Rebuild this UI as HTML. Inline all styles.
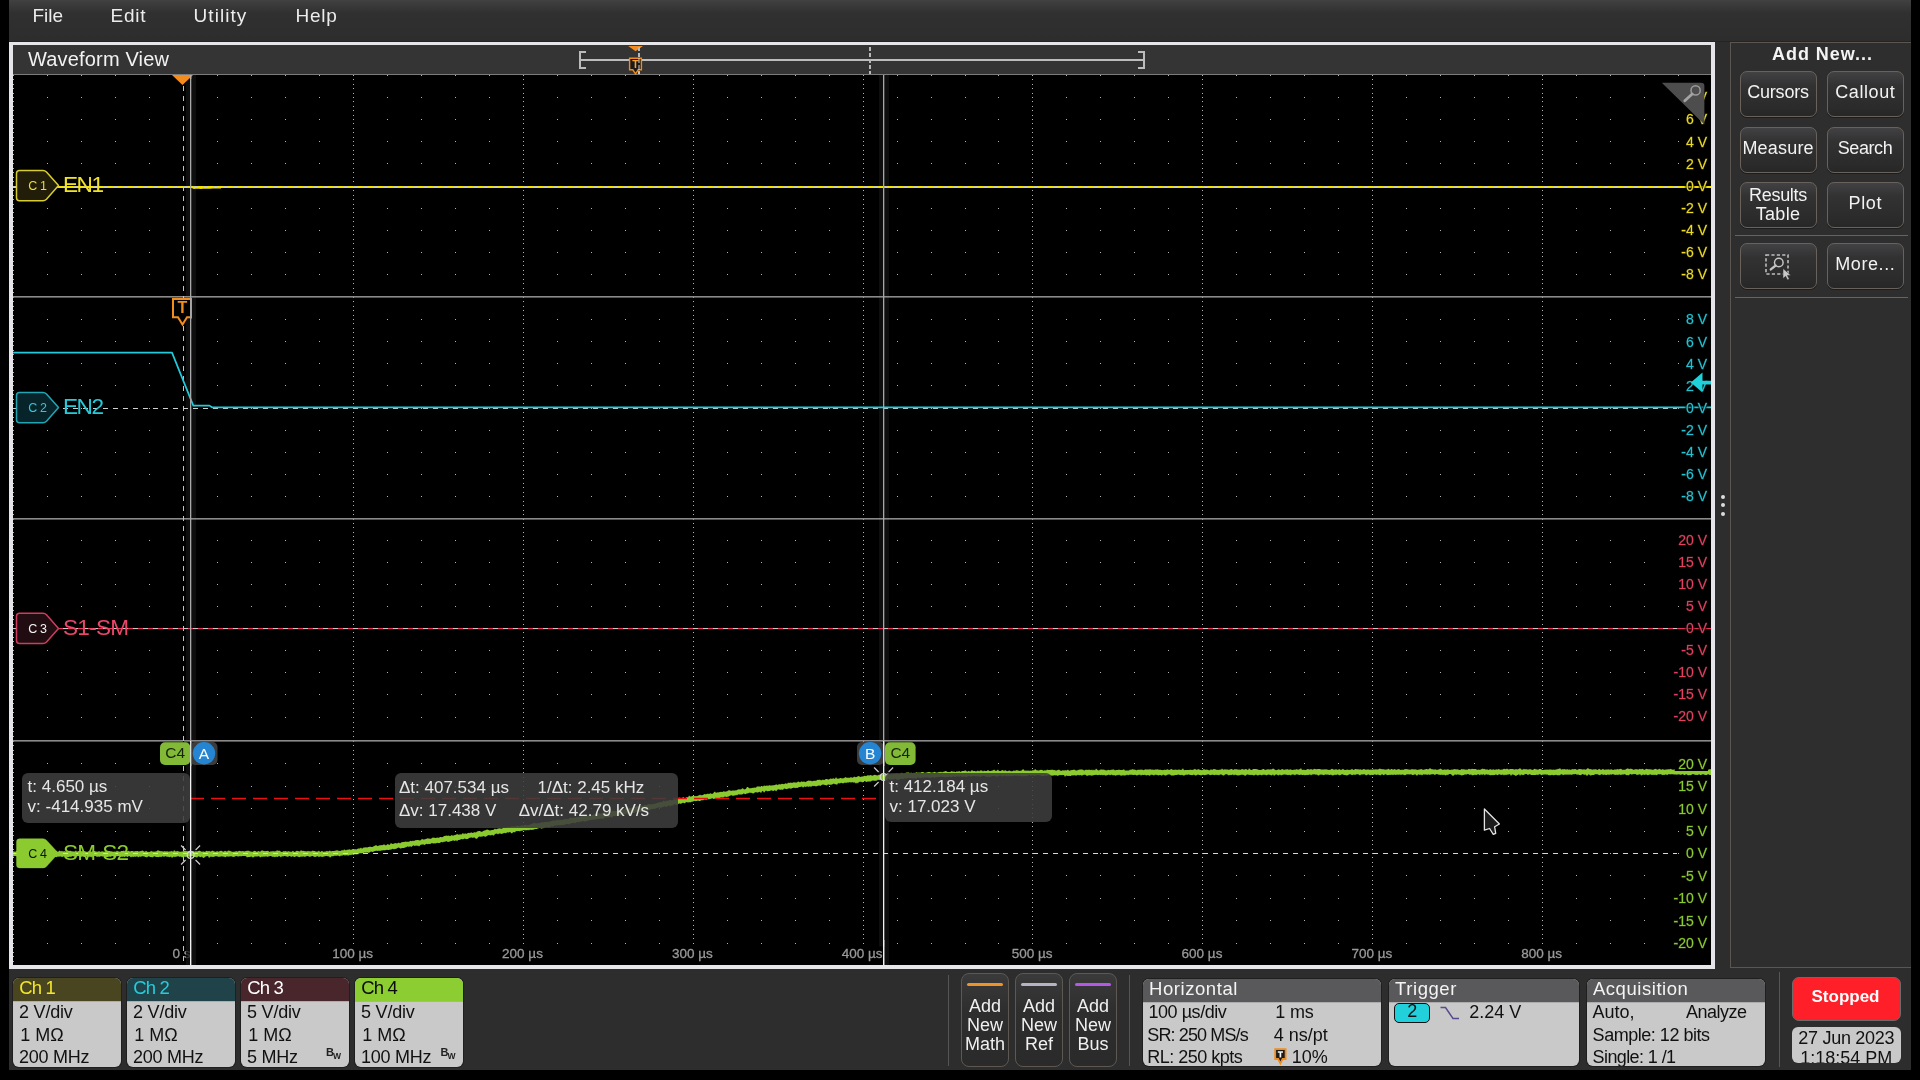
<!DOCTYPE html>
<html lang="en"><head><meta charset="utf-8"><title>Waveform View</title>
<style>
*{box-sizing:border-box;margin:0;padding:0}
html,body{width:1920px;height:1080px;background:#000;overflow:hidden}
body{position:relative;-webkit-font-smoothing:antialiased;font-family:"Liberation Sans",sans-serif;color:#eee}
.abs{position:absolute}
.t{position:absolute;white-space:nowrap;line-height:1}
#root{position:absolute;left:0;top:0;width:1920px;height:1080px;will-change:transform}
#menubar{left:9px;top:0;width:1902px;height:42px;background:linear-gradient(#414141 0,#303030 13px,#2d2d2d 100%);border-bottom:1px solid #242424}
#menubar .t{font-size:19px;color:#ececec;top:6px}
#wvframe{left:9px;top:42px;width:1706px;height:927px;background:#e6e6ea}
#wvtitle{left:13px;top:45px;width:1698px;height:30px;background:#343434;border-bottom:1px solid #7c7c7c}
#grat{left:13px;top:75px;width:1698px;height:890px;background:#000}
#gap{left:1715px;top:42px;width:196px;height:1028px;background:#2d2d2d}
#side{left:1730px;top:42px;width:181px;height:926px;border:1px solid #5c5652;border-right:none;background:#2e2e2e}
#bottom{left:9px;top:969px;width:1902px;height:101px;background:#2d2d2d}
.sbtn{position:absolute;width:77px;height:46px;border:1px solid #69625c;border-radius:7px;background:linear-gradient(#424244 0,#323233 30%,#2b2b2b 80%,#272727 100%);color:#f2f2f2;font-size:18px;text-align:center;line-height:41px;box-shadow:0 1px 0 #1c1c1c}
.sep{position:absolute;height:1px;background:#6a625c}
.badge{position:absolute;border-radius:6px;background:#c9c9c9;overflow:hidden;color:#111;font-size:18px;box-shadow:0 0 0 1px #1f1f1f}
.badge .hd{position:absolute;left:0;top:0;right:0;border-bottom:1.4px solid #adadad}
.badge .t{left:6px}
.abtn{position:absolute;top:973px;width:48px;height:94px;border:1px solid #5e5853;border-radius:8px;background:linear-gradient(#3a3a3b 0,#2e2e2e 40%,#2a2a2a 100%);color:#f0f0f0;font-size:18px;text-align:center;line-height:19.2px}
.abtn i{position:absolute;left:5px;right:5px;top:9px;height:3px;border-radius:2px}
.abtn span{position:absolute;left:-10px;right:-10px;top:22.6px}
.ro{position:absolute;border-radius:6px;background:rgba(62,62,62,.88);color:#e4e4e4;font-size:17px}
</style></head>
<body>
<div id="root">
<div id="menubar" class="abs">
</div>
<div class="t" style="left:32.5px;top:6.02px;font-size:19px;color:#ececec;letter-spacing:0px;">File</div>
<div class="t" style="left:110.5px;top:6.02px;font-size:19px;color:#ececec;letter-spacing:0.75px;">Edit</div>
<div class="t" style="left:193.5px;top:6.02px;font-size:19px;color:#ececec;letter-spacing:1.07px;">Utility</div>
<div class="t" style="left:295.5px;top:6.02px;font-size:19px;color:#ececec;letter-spacing:0.75px;">Help</div>
<div id="wvframe" class="abs"></div>
<div id="wvtitle" class="abs"></div>
<div id="grat" class="abs"></div>
<div class="t" style="left:28px;top:49.07px;font-size:20px;color:#f2f2f2;letter-spacing:0.17px;">Waveform View</div>
<div id="gap" class="abs"></div>
<div id="side" class="abs"></div>
<div id="bottom" class="abs"></div>
<div class="t" style="left:1772px;top:44.76px;font-size:18px;color:#f4f4f4;font-weight:bold;letter-spacing:0.95px;">Add New...</div>
<div class="sbtn" style="left:1739.5px;top:71px;letter-spacing:-0.2px;padding-left:-0.2px">Cursors</div>
<div class="sbtn" style="left:1826.5px;top:71px;letter-spacing:0.6px;padding-left:0.6px">Callout</div>
<div class="sbtn" style="left:1739.5px;top:127px;letter-spacing:0.2px;padding-left:0.2px">Measure</div>
<div class="sbtn" style="left:1826.5px;top:127px;letter-spacing:-0.4px;padding-left:-0.4px">Search</div>
<div class="sbtn" style="left:1739.5px;top:182px;line-height:19px;padding-top:2.6px"><span style="letter-spacing:-.3px">Results</span><br><span style="letter-spacing:.3px">Table</span></div>
<div class="sbtn" style="left:1826.5px;top:182px;letter-spacing:0.6px;padding-left:0.6px">Plot</div>
<div class="sep" style="left:1735px;top:235px;width:173px"></div>
<div class="sbtn" style="left:1739.5px;top:243px;letter-spacing:0px;padding-left:0px"></div>
<div class="sbtn" style="left:1826.5px;top:243px;letter-spacing:0.6px;padding-left:0.6px">More...</div>
<div class="sep" style="left:1735px;top:297px;width:173px"></div>
<svg class="abs" style="left:1760px;top:250px" width="36" height="32" viewBox="1760 250 36 32">
<rect x="1766" y="255" width="22" height="19" fill="none" stroke="#bdbdbd" stroke-width="1.6" stroke-dasharray="3.2 2.2"/>
<circle cx="1778.8" cy="262.5" r="4.3" fill="#2e2e2e" stroke="#c4c4c4" stroke-width="1.5"/>
<line x1="1775.6" y1="265.6" x2="1770.8" y2="269.4" stroke="#c4c4c4" stroke-width="2.4" stroke-linecap="round"/>
<path d="M1783 268.5 L1783 278.5 L1785.6 276.3 L1787.6 280 L1789.3 279.1 L1787.4 275.5 L1790.8 275.2 Z" fill="#c8c8c8" stroke="#2a2a2a" stroke-width=".5"/>
</svg>
<div class="abs" style="left:1720.5px;top:494.5px;width:4px;height:4px;border-radius:2px;background:#dcdcdc"></div>
<div class="abs" style="left:1720.5px;top:503px;width:4px;height:4px;border-radius:2px;background:#dcdcdc"></div>
<div class="abs" style="left:1720.5px;top:511.5px;width:4px;height:4px;border-radius:2px;background:#dcdcdc"></div>
<div class="badge" style="left:13px;top:978px;width:108px;height:89px"><div class="hd" style="background:#4a4521;height:23.9px"></div><div class="t" style="left:6.3px;top:1.04px;font-size:18.5px;color:#f4e62a;letter-spacing:-0.9px;">Ch 1</div><div class="t" style="left:6px;top:24.56px;font-size:18px;color:#111;letter-spacing:-0.2px;">2 V/div</div><div class="t" style="left:7.2px;top:47.76px;font-size:18px;color:#111;letter-spacing:0px;">1 MΩ</div><div class="t" style="left:6px;top:69.76px;font-size:18px;color:#111;letter-spacing:-0.25px;">200 MHz</div></div>
<div class="badge" style="left:127px;top:978px;width:108px;height:89px"><div class="hd" style="background:#1f4349;height:23.9px"></div><div class="t" style="left:6.3px;top:1.04px;font-size:18.5px;color:#27cbdc;letter-spacing:-0.9px;">Ch 2</div><div class="t" style="left:6px;top:24.56px;font-size:18px;color:#111;letter-spacing:-0.2px;">2 V/div</div><div class="t" style="left:7.2px;top:47.76px;font-size:18px;color:#111;letter-spacing:0px;">1 MΩ</div><div class="t" style="left:6px;top:69.76px;font-size:18px;color:#111;letter-spacing:-0.25px;">200 MHz</div></div>
<div class="badge" style="left:241px;top:978px;width:108px;height:89px"><div class="hd" style="background:#48262c;height:23.9px"></div><div class="t" style="left:6.3px;top:1.04px;font-size:18.5px;color:#ffffff;letter-spacing:-0.9px;">Ch 3</div><div class="t" style="left:6px;top:24.56px;font-size:18px;color:#111;letter-spacing:-0.2px;">5 V/div</div><div class="t" style="left:7.2px;top:47.76px;font-size:18px;color:#111;letter-spacing:0px;">1 MΩ</div><div class="t" style="left:6px;top:69.76px;font-size:18px;color:#111;letter-spacing:-0.25px;">5 MHz</div><div class="t" style="left:85px;top:69px;font-size:11px;font-weight:bold;color:#222">B<span style="font-size:8.5px;position:relative;top:3.4px;left:-1px">W</span></div></div>
<div class="badge" style="left:355px;top:978px;width:108px;height:89px"><div class="hd" style="background:#8ccd32;height:23.9px"></div><div class="t" style="left:6.3px;top:1.04px;font-size:18.5px;color:#0a0a0a;letter-spacing:-0.9px;">Ch 4</div><div class="t" style="left:6px;top:24.56px;font-size:18px;color:#111;letter-spacing:-0.2px;">5 V/div</div><div class="t" style="left:7.2px;top:47.76px;font-size:18px;color:#111;letter-spacing:0px;">1 MΩ</div><div class="t" style="left:6px;top:69.76px;font-size:18px;color:#111;letter-spacing:-0.25px;">100 MHz</div><div class="t" style="left:85.5px;top:69px;font-size:11px;font-weight:bold;color:#222">B<span style="font-size:8.5px;position:relative;top:3.4px;left:-1px">W</span></div></div>
<div class="abs" style="left:948px;top:975px;width:1px;height:91px;background:#555"></div>
<div class="abs" style="left:1129px;top:975px;width:1px;height:91px;background:#555"></div>
<div class="abs" style="left:1779px;top:972px;width:1px;height:95px;background:#5c5450"></div>
<div class="abtn" style="left:961px"><i style="background:#f0922a"></i><span>Add<br>New<br>Math</span></div>
<div class="abtn" style="left:1015px"><i style="background:#b4b4c2"></i><span>Add<br>New<br>Ref</span></div>
<div class="abtn" style="left:1069px"><i style="background:#b458e8"></i><span>Add<br>New<br>Bus</span></div>
<div class="badge" style="left:1142.8px;top:979.4px;width:238.4px;height:87px"><div class="hd" style="background:#59595b;height:23.3px"></div><div class="t" style="left:6.3px;top:1.04px;font-size:18.5px;color:#f4f4f4;letter-spacing:0.55px;">Horizontal</div><div class="t" style="left:5.7px;top:23.16px;font-size:18px;color:#111;letter-spacing:-0.46px;">100 µs/div</div><div class="t" style="left:132.5px;top:23.16px;font-size:18px;color:#111;letter-spacing:-0.2px;">1 ms</div><div class="t" style="left:4.5px;top:46.76px;font-size:18px;color:#111;letter-spacing:-0.88px;">SR: 250 MS/s</div><div class="t" style="left:131px;top:46.76px;font-size:18px;color:#111;letter-spacing:0px;">4 ns/pt</div><div class="t" style="left:4.5px;top:68.46px;font-size:18px;color:#111;letter-spacing:-0.5px;">RL: 250 kpts</div><div class="t" style="left:149px;top:68.46px;font-size:18px;color:#111;letter-spacing:0px;">10%</div><svg class="abs" style="left:131.4px;top:68.6px" width="14" height="17" viewBox="0 0 14 17"><path d="M1.2 1.2 H11.6 V11 H8.6 L6.4 15.4 L4.2 11 H1.2 Z" fill="#1a1a1a" stroke="#f08c1e" stroke-width="1.8"/><path d="M3.8 4 H9 M6.4 4 V9.4" stroke="#f4f4f4" stroke-width="1.7" fill="none"/></svg></div>
<div class="badge" style="left:1388.8px;top:979.4px;width:190.4px;height:87px"><div class="hd" style="background:#59595b;height:23.3px"></div><div class="t" style="left:6.3px;top:1.04px;font-size:18.5px;color:#f4f4f4;letter-spacing:0.55px;">Trigger</div><div class="t" style="left:80.5px;top:23.16px;font-size:18px;color:#111;letter-spacing:0px;">2.24 V</div><div class="abs" style="left:5.4px;top:23.4px;width:36.2px;height:20px;border:1px solid #111;border-radius:5px;background:#21d0da;color:#111;font-size:18px;text-align:center;line-height:15px">2</div>
<svg class="abs" style="left:50px;top:26px" width="22" height="16" viewBox="0 0 22 16"><path d="M1.5 2.5 H6.5 L14 13.5 H20" fill="none" stroke="#5a4a90" stroke-width="1.5"/></svg></div>
<div class="badge" style="left:1586.6px;top:979.4px;width:178.8px;height:87px"><div class="hd" style="background:#59595b;height:23.3px"></div><div class="t" style="left:6.3px;top:1.04px;font-size:18.5px;color:#f4f4f4;letter-spacing:0.55px;">Acquisition</div><div class="t" style="left:6px;top:23.16px;font-size:18px;color:#111;letter-spacing:0px;">Auto,</div><div class="t" style="left:99.5px;top:23.16px;font-size:18px;color:#111;letter-spacing:-0.5px;">Analyze</div><div class="t" style="left:6px;top:46.76px;font-size:18px;color:#111;letter-spacing:-0.47px;">Sample: 12 bits</div><div class="t" style="left:6px;top:68.46px;font-size:18px;color:#111;letter-spacing:-0.6px;">Single: 1 /1</div></div>
<div class="abs" style="left:1792px;top:976.5px;width:109px;height:44px;border:1px solid #6b6b6b;border-radius:7px;background:#ff1f28"></div>
<div class="t" style="left:1811.5px;top:987.61px;font-size:17px;color:#fff;font-weight:bold;">Stopped</div>
<div class="abs" style="left:1792px;top:1026.5px;width:108.5px;height:36px;border-radius:6px;background:#c9c9c9;overflow:hidden;color:#111;font-size:18px;text-align:center"><div class="t" style="left:0;right:0;top:2.66px;font-size:18px;letter-spacing:-.3px;text-align:center;color:#111">27 Jun 2023</div><div class="t" style="left:0;right:0;top:22.26px;font-size:18px;text-align:center;color:#111">1:18:54 PM</div></div>
<svg class="abs" style="left:0;top:0" width="1920" height="1080" viewBox="0 0 1920 1080" font-family='"Liberation Sans", sans-serif'>
<defs><clipPath id="gc"><rect x="13" y="75" width="1698" height="890"/></clipPath></defs>
<g clip-path="url(#gc)">
<rect x="186" y="75" width="10" height="890" fill="#0e0e0e"/>
<rect x="879" y="75" width="10" height="890" fill="#0e0e0e"/>
<g stroke="#b4b4b4" stroke-width="1" shape-rendering="crispEdges">
<line x1="13.3" y1="75.5" x2="1711" y2="75.5" stroke-dasharray="1 32.972"/>
<line x1="13.3" y1="97.5" x2="1711" y2="97.5" stroke-dasharray="1 32.972"/>
<line x1="13.3" y1="119.5" x2="1711" y2="119.5" stroke-dasharray="1 32.972"/>
<line x1="13.3" y1="141.5" x2="1711" y2="141.5" stroke-dasharray="1 32.972"/>
<line x1="13.3" y1="163.5" x2="1711" y2="163.5" stroke-dasharray="1 32.972"/>
<line x1="13.3" y1="186.5" x2="1711" y2="186.5" stroke-dasharray="1 32.972"/>
<line x1="13.3" y1="208.5" x2="1711" y2="208.5" stroke-dasharray="1 32.972"/>
<line x1="13.3" y1="230.5" x2="1711" y2="230.5" stroke-dasharray="1 32.972"/>
<line x1="13.3" y1="252.5" x2="1711" y2="252.5" stroke-dasharray="1 32.972"/>
<line x1="13.3" y1="274.5" x2="1711" y2="274.5" stroke-dasharray="1 32.972"/>
<line x1="13.3" y1="319.5" x2="1711" y2="319.5" stroke-dasharray="1 32.972"/>
<line x1="13.3" y1="341.5" x2="1711" y2="341.5" stroke-dasharray="1 32.972"/>
<line x1="13.3" y1="363.5" x2="1711" y2="363.5" stroke-dasharray="1 32.972"/>
<line x1="13.3" y1="385.5" x2="1711" y2="385.5" stroke-dasharray="1 32.972"/>
<line x1="13.3" y1="408.5" x2="1711" y2="408.5" stroke-dasharray="1 32.972"/>
<line x1="13.3" y1="430.5" x2="1711" y2="430.5" stroke-dasharray="1 32.972"/>
<line x1="13.3" y1="452.5" x2="1711" y2="452.5" stroke-dasharray="1 32.972"/>
<line x1="13.3" y1="474.5" x2="1711" y2="474.5" stroke-dasharray="1 32.972"/>
<line x1="13.3" y1="496.5" x2="1711" y2="496.5" stroke-dasharray="1 32.972"/>
<line x1="13.3" y1="540.5" x2="1711" y2="540.5" stroke-dasharray="1 32.972"/>
<line x1="13.3" y1="562.5" x2="1711" y2="562.5" stroke-dasharray="1 32.972"/>
<line x1="13.3" y1="584.5" x2="1711" y2="584.5" stroke-dasharray="1 32.972"/>
<line x1="13.3" y1="606.5" x2="1711" y2="606.5" stroke-dasharray="1 32.972"/>
<line x1="13.3" y1="628.5" x2="1711" y2="628.5" stroke-dasharray="1 32.972"/>
<line x1="13.3" y1="650.5" x2="1711" y2="650.5" stroke-dasharray="1 32.972"/>
<line x1="13.3" y1="672.5" x2="1711" y2="672.5" stroke-dasharray="1 32.972"/>
<line x1="13.3" y1="694.5" x2="1711" y2="694.5" stroke-dasharray="1 32.972"/>
<line x1="13.3" y1="717.5" x2="1711" y2="717.5" stroke-dasharray="1 32.972"/>
<line x1="13.3" y1="763.5" x2="1711" y2="763.5" stroke-dasharray="1 32.972"/>
<line x1="13.3" y1="786.5" x2="1711" y2="786.5" stroke-dasharray="1 32.972"/>
<line x1="13.3" y1="808.5" x2="1711" y2="808.5" stroke-dasharray="1 32.972"/>
<line x1="13.3" y1="831.5" x2="1711" y2="831.5" stroke-dasharray="1 32.972"/>
<line x1="13.3" y1="853.5" x2="1711" y2="853.5" stroke-dasharray="1 32.972"/>
<line x1="13.3" y1="875.5" x2="1711" y2="875.5" stroke-dasharray="1 32.972"/>
<line x1="13.3" y1="898.5" x2="1711" y2="898.5" stroke-dasharray="1 32.972"/>
<line x1="13.3" y1="920.5" x2="1711" y2="920.5" stroke-dasharray="1 32.972"/>
<line x1="13.3" y1="943.5" x2="1711" y2="943.5" stroke-dasharray="1 32.972"/>
</g>
<defs><g id="vc" fill="#b4b4b4" shape-rendering="crispEdges"><rect y="75" width="1" height="1"/><rect y="79" width="1" height="1"/><rect y="84" width="1" height="1"/><rect y="88" width="1" height="1"/><rect y="93" width="1" height="1"/><rect y="97" width="1" height="1"/><rect y="101" width="1" height="1"/><rect y="106" width="1" height="1"/><rect y="110" width="1" height="1"/><rect y="115" width="1" height="1"/><rect y="119" width="1" height="1"/><rect y="123" width="1" height="1"/><rect y="128" width="1" height="1"/><rect y="132" width="1" height="1"/><rect y="137" width="1" height="1"/><rect y="141" width="1" height="1"/><rect y="145" width="1" height="1"/><rect y="150" width="1" height="1"/><rect y="154" width="1" height="1"/><rect y="159" width="1" height="1"/><rect y="163" width="1" height="1"/><rect y="168" width="1" height="1"/><rect y="172" width="1" height="1"/><rect y="177" width="1" height="1"/><rect y="181" width="1" height="1"/><rect y="186" width="1" height="1"/><rect y="190" width="1" height="1"/><rect y="195" width="1" height="1"/><rect y="199" width="1" height="1"/><rect y="204" width="1" height="1"/><rect y="208" width="1" height="1"/><rect y="212" width="1" height="1"/><rect y="217" width="1" height="1"/><rect y="221" width="1" height="1"/><rect y="226" width="1" height="1"/><rect y="230" width="1" height="1"/><rect y="234" width="1" height="1"/><rect y="239" width="1" height="1"/><rect y="243" width="1" height="1"/><rect y="248" width="1" height="1"/><rect y="252" width="1" height="1"/><rect y="256" width="1" height="1"/><rect y="261" width="1" height="1"/><rect y="265" width="1" height="1"/><rect y="270" width="1" height="1"/><rect y="274" width="1" height="1"/><rect y="279" width="1" height="1"/><rect y="283" width="1" height="1"/><rect y="288" width="1" height="1"/><rect y="292" width="1" height="1"/><rect y="297" width="1" height="1"/><rect y="301" width="1" height="1"/><rect y="306" width="1" height="1"/><rect y="310" width="1" height="1"/><rect y="315" width="1" height="1"/><rect y="319" width="1" height="1"/><rect y="323" width="1" height="1"/><rect y="328" width="1" height="1"/><rect y="332" width="1" height="1"/><rect y="337" width="1" height="1"/><rect y="341" width="1" height="1"/><rect y="345" width="1" height="1"/><rect y="350" width="1" height="1"/><rect y="354" width="1" height="1"/><rect y="359" width="1" height="1"/><rect y="363" width="1" height="1"/><rect y="367" width="1" height="1"/><rect y="372" width="1" height="1"/><rect y="376" width="1" height="1"/><rect y="381" width="1" height="1"/><rect y="385" width="1" height="1"/><rect y="390" width="1" height="1"/><rect y="394" width="1" height="1"/><rect y="399" width="1" height="1"/><rect y="403" width="1" height="1"/><rect y="408" width="1" height="1"/><rect y="412" width="1" height="1"/><rect y="417" width="1" height="1"/><rect y="421" width="1" height="1"/><rect y="426" width="1" height="1"/><rect y="430" width="1" height="1"/><rect y="434" width="1" height="1"/><rect y="439" width="1" height="1"/><rect y="443" width="1" height="1"/><rect y="448" width="1" height="1"/><rect y="452" width="1" height="1"/><rect y="456" width="1" height="1"/><rect y="461" width="1" height="1"/><rect y="465" width="1" height="1"/><rect y="470" width="1" height="1"/><rect y="474" width="1" height="1"/><rect y="478" width="1" height="1"/><rect y="483" width="1" height="1"/><rect y="487" width="1" height="1"/><rect y="492" width="1" height="1"/><rect y="496" width="1" height="1"/><rect y="501" width="1" height="1"/><rect y="505" width="1" height="1"/><rect y="510" width="1" height="1"/><rect y="514" width="1" height="1"/><rect y="519" width="1" height="1"/><rect y="523" width="1" height="1"/><rect y="527" width="1" height="1"/><rect y="532" width="1" height="1"/><rect y="536" width="1" height="1"/><rect y="540" width="1" height="1"/><rect y="544" width="1" height="1"/><rect y="549" width="1" height="1"/><rect y="553" width="1" height="1"/><rect y="558" width="1" height="1"/><rect y="562" width="1" height="1"/><rect y="566" width="1" height="1"/><rect y="571" width="1" height="1"/><rect y="575" width="1" height="1"/><rect y="580" width="1" height="1"/><rect y="584" width="1" height="1"/><rect y="588" width="1" height="1"/><rect y="593" width="1" height="1"/><rect y="597" width="1" height="1"/><rect y="602" width="1" height="1"/><rect y="606" width="1" height="1"/><rect y="610" width="1" height="1"/><rect y="615" width="1" height="1"/><rect y="619" width="1" height="1"/><rect y="624" width="1" height="1"/><rect y="628" width="1" height="1"/><rect y="632" width="1" height="1"/><rect y="637" width="1" height="1"/><rect y="641" width="1" height="1"/><rect y="646" width="1" height="1"/><rect y="650" width="1" height="1"/><rect y="654" width="1" height="1"/><rect y="659" width="1" height="1"/><rect y="663" width="1" height="1"/><rect y="668" width="1" height="1"/><rect y="672" width="1" height="1"/><rect y="676" width="1" height="1"/><rect y="681" width="1" height="1"/><rect y="685" width="1" height="1"/><rect y="690" width="1" height="1"/><rect y="694" width="1" height="1"/><rect y="699" width="1" height="1"/><rect y="703" width="1" height="1"/><rect y="708" width="1" height="1"/><rect y="712" width="1" height="1"/><rect y="717" width="1" height="1"/><rect y="722" width="1" height="1"/><rect y="727" width="1" height="1"/><rect y="731" width="1" height="1"/><rect y="736" width="1" height="1"/><rect y="741" width="1" height="1"/><rect y="745" width="1" height="1"/><rect y="750" width="1" height="1"/><rect y="754" width="1" height="1"/><rect y="759" width="1" height="1"/><rect y="763" width="1" height="1"/><rect y="768" width="1" height="1"/><rect y="772" width="1" height="1"/><rect y="777" width="1" height="1"/><rect y="781" width="1" height="1"/><rect y="786" width="1" height="1"/><rect y="790" width="1" height="1"/><rect y="795" width="1" height="1"/><rect y="799" width="1" height="1"/><rect y="804" width="1" height="1"/><rect y="808" width="1" height="1"/><rect y="813" width="1" height="1"/><rect y="817" width="1" height="1"/><rect y="822" width="1" height="1"/><rect y="826" width="1" height="1"/><rect y="831" width="1" height="1"/><rect y="835" width="1" height="1"/><rect y="840" width="1" height="1"/><rect y="844" width="1" height="1"/><rect y="849" width="1" height="1"/><rect y="853" width="1" height="1"/><rect y="857" width="1" height="1"/><rect y="862" width="1" height="1"/><rect y="866" width="1" height="1"/><rect y="871" width="1" height="1"/><rect y="875" width="1" height="1"/><rect y="880" width="1" height="1"/><rect y="884" width="1" height="1"/><rect y="889" width="1" height="1"/><rect y="893" width="1" height="1"/><rect y="898" width="1" height="1"/><rect y="902" width="1" height="1"/><rect y="907" width="1" height="1"/><rect y="911" width="1" height="1"/><rect y="916" width="1" height="1"/><rect y="920" width="1" height="1"/><rect y="925" width="1" height="1"/><rect y="929" width="1" height="1"/><rect y="934" width="1" height="1"/><rect y="938" width="1" height="1"/><rect y="943" width="1" height="1"/><rect y="947" width="1" height="1"/><rect y="952" width="1" height="1"/><rect y="956" width="1" height="1"/><rect y="961" width="1" height="1"/></g></defs>
<use href="#vc" x="13"/>
<use href="#vc" x="183"/>
<use href="#vc" x="353"/>
<use href="#vc" x="523"/>
<use href="#vc" x="693"/>
<use href="#vc" x="863"/>
<use href="#vc" x="1032"/>
<use href="#vc" x="1202"/>
<use href="#vc" x="1372"/>
<use href="#vc" x="1542"/>
<rect x="13" y="296.0" width="1698" height="1.6" fill="#8a8a8a"/>
<rect x="13" y="518.0" width="1698" height="1.6" fill="#8a8a8a"/>
<rect x="13" y="740.0" width="1698" height="1.6" fill="#8a8a8a"/>
<rect x="183" y="76" width="1" height="889" fill="#000"/>
<line x1="183.5" y1="75.6" x2="183.5" y2="965" stroke="#c4c4c4" stroke-width="1" stroke-dasharray="5 5" shape-rendering="crispEdges"/>
<rect x="13" y="186" width="1698" height="2" fill="#f2e400"/>
<line x1="13" y1="186.5" x2="1677" y2="186.5" stroke="#c9c9b0" stroke-width="1" stroke-dasharray="5 5" shape-rendering="crispEdges"/>
<path d="M192 187.5 l2 .8 l3 -.3 l4 .4 l3 -.6 l6 .3 l5 -.4 l6 .3" stroke="#f2e400" stroke-width="1.2" fill="none"/>
<line x1="13" y1="408.5" x2="1677" y2="408.5" stroke="#cfcfcf" stroke-width="1" stroke-dasharray="5 5" shape-rendering="crispEdges"/>
<path d="M13 352.6 H172 L193.3 405.6 H209.5 L212 407.3 H1711" fill="none" stroke="#22cbdb" stroke-width="1.7" stroke-linejoin="round"/>
<rect x="13" y="628" width="1698" height="1.2" fill="#e2365a"/>
<line x1="13" y1="628.5" x2="1677" y2="628.5" stroke="#c8c8c8" stroke-width="1" stroke-dasharray="5 5" shape-rendering="crispEdges"/>
<polygon points="13,851.5 14,851.2 15,851.9 16,851.3 17,851.1 18,849.7 19,851.7 20,851.7 21,851.2 22,851.0 23,851.3 24,851.6 25,851.0 26,851.4 27,851.8 28,850.8 29,851.1 30,851.3 31,851.1 32,851.4 33,851.7 34,851.7 35,851.8 36,850.8 37,851.4 38,851.7 39,851.1 40,851.4 41,851.2 42,850.7 43,851.4 44,851.8 45,850.6 46,851.8 47,851.1 48,851.4 49,851.3 50,851.5 51,851.9 52,850.3 53,850.8 54,851.7 55,851.5 56,850.8 57,851.6 58,851.9 59,850.7 60,850.7 61,851.6 62,850.8 63,851.8 64,850.9 65,851.5 66,851.4 67,851.7 68,851.7 69,851.4 70,850.6 71,851.3 72,851.6 73,851.6 74,851.4 75,851.4 76,850.3 77,851.9 78,851.0 79,851.2 80,851.6 81,851.2 82,851.1 83,851.3 84,851.0 85,851.2 86,851.7 87,851.8 88,851.7 89,850.8 90,851.4 91,851.7 92,851.6 93,851.2 94,851.1 95,850.9 96,851.8 97,851.4 98,851.7 99,850.9 100,851.8 101,851.8 102,851.3 103,851.6 104,851.8 105,851.5 106,851.2 107,850.7 108,851.7 109,850.8 110,851.4 111,851.5 112,851.4 113,851.8 114,851.8 115,851.5 116,851.7 117,850.6 118,851.5 119,851.3 120,851.9 121,850.9 122,851.1 123,851.0 124,850.6 125,851.8 126,850.9 127,851.2 128,851.1 129,850.7 130,851.8 131,851.1 132,850.9 133,851.0 134,851.8 135,850.9 136,851.3 137,851.1 138,850.9 139,851.8 140,851.0 141,851.3 142,850.6 143,850.8 144,851.6 145,851.7 146,850.8 147,851.6 148,851.9 149,851.7 150,851.9 151,850.7 152,851.4 153,851.4 154,851.8 155,851.6 156,851.4 157,851.1 158,850.1 159,850.9 160,850.7 161,851.5 162,851.0 163,851.7 164,851.3 165,851.3 166,851.5 167,851.2 168,851.4 169,851.8 170,851.2 171,851.5 172,850.7 173,851.9 174,850.2 175,850.8 176,851.8 177,850.7 178,851.3 179,851.6 180,851.7 181,851.8 182,851.4 183,851.5 184,850.8 185,850.7 186,851.3 187,851.0 188,851.5 189,850.9 190,850.6 191,851.6 192,851.3 193,851.0 194,851.6 195,851.8 196,850.9 197,851.7 198,851.0 199,850.8 200,850.7 201,851.4 202,851.8 203,851.6 204,851.4 205,851.9 206,850.9 207,850.7 208,851.5 209,850.7 210,851.6 211,851.4 212,850.7 213,850.8 214,851.5 215,851.6 216,851.9 217,850.8 218,851.8 219,851.6 220,850.9 221,850.8 222,850.9 223,851.7 224,851.4 225,850.8 226,851.3 227,851.8 228,850.6 229,850.8 230,850.7 231,851.6 232,851.6 233,851.9 234,851.5 235,851.8 236,851.1 237,851.4 238,851.5 239,850.8 240,851.0 241,851.3 242,851.3 243,851.1 244,851.4 245,851.2 246,850.9 247,850.7 248,850.7 249,850.8 250,851.4 251,851.6 252,851.7 253,851.8 254,850.8 255,851.1 256,851.3 257,851.9 258,850.9 259,851.3 260,851.8 261,851.1 262,850.3 263,850.7 264,850.9 265,851.3 266,850.9 267,850.9 268,850.8 269,851.6 270,851.9 271,851.0 272,851.8 273,850.8 274,851.8 275,850.9 276,851.4 277,850.0 278,851.1 279,850.6 280,851.1 281,851.7 282,851.9 283,851.6 284,851.1 285,851.6 286,850.8 287,851.9 288,851.1 289,851.6 290,851.4 291,851.9 292,851.6 293,850.8 294,851.8 295,851.9 296,850.9 297,850.7 298,851.0 299,851.2 300,851.6 301,849.9 302,850.9 303,850.8 304,851.1 305,851.3 306,851.3 307,851.6 308,850.8 309,851.5 310,851.0 311,851.8 312,850.8 313,850.7 314,850.9 315,851.1 316,851.8 317,851.5 318,851.5 319,850.6 320,851.9 321,851.4 322,850.7 323,851.8 324,851.8 325,851.5 326,851.4 327,850.8 328,851.6 329,850.9 330,850.5 331,851.4 332,851.1 333,850.9 334,851.1 335,850.7 336,850.5 337,850.3 338,850.5 339,851.0 340,850.8 341,851.0 342,849.7 343,850.7 344,849.4 345,849.8 346,850.4 347,849.4 348,849.9 349,849.3 350,849.4 351,850.0 352,849.2 353,849.1 354,849.6 355,849.1 356,849.4 357,849.3 358,848.6 359,848.6 360,848.5 361,847.5 362,848.7 363,848.1 364,847.2 365,847.8 366,847.1 367,847.8 368,846.9 369,847.1 370,846.5 371,846.9 372,847.0 373,846.7 374,845.9 375,845.8 376,845.1 377,845.8 378,846.2 379,845.2 380,845.5 381,845.1 382,845.3 383,845.1 384,844.2 385,844.9 386,845.4 387,844.4 388,843.9 389,845.0 390,844.4 391,842.7 392,844.1 393,843.7 394,843.7 395,843.1 396,843.3 397,843.4 398,842.9 399,842.4 400,843.4 401,842.4 402,842.3 403,842.1 404,841.9 405,841.7 406,841.5 407,842.0 408,841.4 409,842.1 410,840.8 411,841.1 412,841.2 413,840.4 414,841.2 415,840.2 416,840.2 417,840.0 418,840.0 419,840.3 420,840.5 421,840.0 422,838.7 423,839.5 424,839.5 425,839.3 426,839.0 427,838.6 428,838.2 429,838.7 430,838.4 431,839.0 432,837.8 433,837.7 434,837.5 435,838.0 436,838.1 437,837.4 438,837.7 439,837.8 440,837.0 441,837.0 442,837.3 443,836.9 444,835.9 445,836.1 446,835.4 447,835.7 448,835.7 449,835.5 450,836.2 451,835.6 452,835.0 453,835.9 454,835.0 455,835.2 456,834.4 457,834.3 458,834.3 459,835.1 460,834.1 461,834.7 462,834.1 463,832.8 464,834.4 465,833.1 466,834.0 467,833.4 468,833.0 469,832.8 470,833.2 471,832.3 472,832.8 473,833.0 474,832.3 475,832.3 476,832.5 477,831.6 478,831.3 479,831.1 480,830.9 481,831.7 482,831.7 483,831.3 484,830.4 485,830.4 486,830.1 487,829.5 488,829.8 489,830.3 490,830.6 491,830.3 492,829.9 493,830.1 494,829.4 495,828.6 496,829.4 497,828.7 498,828.7 499,828.2 500,828.6 501,828.5 502,828.7 503,827.7 504,827.6 505,827.5 506,827.8 507,827.2 508,826.8 509,827.1 510,827.2 511,826.4 512,826.5 513,826.6 514,826.5 515,826.4 516,826.6 517,825.6 518,826.0 519,826.2 520,826.3 521,825.5 522,825.5 523,825.6 524,825.4 525,824.6 526,825.2 527,825.2 528,825.2 529,825.0 530,824.8 531,824.0 532,823.7 533,823.5 534,822.4 535,823.6 536,823.1 537,823.4 538,823.3 539,822.7 540,823.3 541,822.6 542,822.1 543,822.5 544,822.2 545,822.1 546,821.8 547,822.1 548,822.2 549,821.5 550,821.5 551,821.3 552,820.5 553,820.5 554,820.4 555,820.7 556,820.4 557,819.3 558,820.5 559,819.7 560,819.9 561,819.7 562,820.1 563,820.0 564,819.1 565,818.8 566,819.4 567,818.7 568,819.2 569,818.6 570,817.8 571,817.7 572,818.0 573,817.6 574,817.7 575,817.7 576,817.3 577,817.3 578,817.2 579,816.3 580,817.1 581,816.1 582,816.0 583,816.4 584,816.0 585,815.6 586,815.9 587,815.1 588,815.7 589,815.1 590,815.5 591,815.4 592,815.0 593,815.1 594,813.9 595,814.7 596,813.9 597,813.6 598,813.6 599,813.2 600,813.8 601,813.8 602,812.6 603,812.9 604,812.3 605,812.1 606,812.9 607,811.9 608,811.7 609,811.3 610,811.4 611,812.1 612,810.8 613,810.9 614,810.4 615,811.4 616,810.9 617,810.8 618,809.7 619,810.6 620,809.9 621,809.6 622,810.1 623,810.0 624,809.3 625,809.2 626,808.2 627,808.0 628,808.5 629,807.7 630,807.9 631,808.5 632,808.1 633,807.9 634,807.5 635,807.3 636,806.3 637,806.3 638,806.5 639,806.2 640,806.2 641,806.0 642,805.3 643,805.9 644,805.6 645,804.7 646,804.9 647,805.0 648,804.2 649,804.0 650,804.5 651,803.9 652,804.5 653,804.2 654,803.6 655,803.8 656,803.6 657,802.8 658,803.0 659,802.3 660,802.3 661,801.7 662,802.4 663,801.1 664,800.2 665,801.9 666,800.8 667,800.4 668,801.1 669,800.2 670,799.9 671,799.9 672,800.4 673,800.0 674,799.1 675,799.7 676,799.2 677,798.6 678,798.9 679,797.2 680,798.1 681,797.7 682,798.6 683,796.8 684,797.7 685,798.2 686,797.4 687,797.0 688,797.4 689,795.4 690,796.3 691,796.8 692,795.9 693,796.0 694,796.0 695,796.2 696,796.1 697,796.3 698,795.4 699,795.6 700,794.6 701,795.6 702,795.1 703,795.3 704,794.0 705,794.2 706,794.2 707,793.9 708,793.6 709,794.3 710,793.2 711,793.4 712,794.0 713,793.5 714,792.2 715,791.4 716,793.0 717,792.3 718,792.4 719,792.2 720,791.9 721,791.7 722,791.9 723,791.8 724,791.0 725,792.1 726,791.2 727,791.6 728,790.5 729,790.2 730,790.3 731,791.1 732,790.6 733,790.4 734,790.5 735,790.4 736,790.2 737,790.2 738,789.3 739,789.5 740,789.2 741,789.6 742,788.6 743,788.3 744,789.4 745,789.2 746,788.7 747,786.9 748,787.1 749,788.2 750,788.2 751,788.3 752,788.1 753,787.7 754,787.8 755,787.6 756,787.7 757,786.3 758,786.8 759,786.2 760,786.7 761,786.6 762,786.2 763,786.4 764,785.6 765,785.7 766,786.1 767,785.3 768,786.0 769,785.2 770,785.2 771,785.7 772,785.2 773,785.4 774,784.9 775,785.3 776,784.3 777,784.8 778,785.0 779,784.0 780,784.4 781,784.2 782,783.8 783,784.1 784,784.2 785,783.4 786,783.2 787,783.9 788,782.6 789,783.0 790,782.7 791,782.5 792,783.1 793,782.5 794,782.2 795,782.6 796,782.5 797,782.4 798,781.5 799,781.8 800,782.6 801,781.6 802,781.6 803,781.9 804,781.2 805,782.2 806,781.7 807,781.3 808,780.8 809,780.6 810,781.1 811,780.6 812,781.4 813,780.7 814,780.9 815,780.6 816,781.0 817,779.9 818,779.7 819,779.9 820,779.6 821,780.5 822,779.9 823,779.5 824,780.2 825,779.4 826,778.9 827,778.9 828,779.4 829,779.6 830,778.8 831,778.4 832,779.1 833,778.2 834,778.6 835,778.9 836,777.1 837,778.7 838,778.6 839,778.7 840,778.1 841,778.0 842,778.6 843,778.2 844,778.3 845,777.3 846,777.2 847,778.1 848,777.5 849,777.9 850,777.4 851,777.3 852,777.6 853,777.8 854,776.6 855,776.9 856,777.2 857,776.7 858,776.3 859,776.1 860,776.9 861,776.7 862,776.6 863,776.4 864,775.9 865,775.7 866,776.3 867,775.6 868,775.3 869,775.6 870,775.2 871,775.0 872,775.8 873,775.4 874,775.0 875,774.8 876,775.2 877,775.2 878,775.5 879,774.4 880,774.9 881,774.4 882,774.2 883,774.9 884,774.7 885,774.6 886,774.4 887,773.5 888,773.2 889,774.1 890,774.6 891,774.1 892,774.5 893,774.1 894,773.8 895,774.0 896,773.5 897,773.2 898,773.9 899,774.1 900,773.7 901,773.1 902,772.8 903,773.5 904,773.6 905,772.9 906,772.8 907,772.5 908,772.5 909,772.5 910,773.6 911,772.4 912,773.0 913,773.1 914,772.8 915,773.0 916,772.6 917,772.3 918,773.0 919,772.3 920,773.1 921,772.3 922,771.9 923,772.1 924,772.4 925,772.9 926,772.4 927,772.5 928,771.9 929,771.9 930,771.9 931,772.7 932,772.5 933,772.5 934,771.9 935,771.8 936,772.7 937,772.6 938,772.6 939,771.8 940,772.3 941,771.5 942,772.5 943,771.7 944,771.8 945,771.2 946,771.1 947,771.8 948,771.9 949,772.1 950,772.0 951,771.5 952,771.0 953,772.1 954,771.2 955,771.9 956,772.1 957,771.0 958,771.9 959,770.8 960,771.8 961,771.7 962,771.0 963,771.0 964,770.9 965,770.5 966,770.4 967,771.8 968,771.3 969,770.7 970,771.7 971,771.0 972,770.0 973,770.9 974,770.9 975,771.0 976,771.5 977,770.9 978,770.5 979,771.4 980,770.5 981,770.6 982,770.4 983,771.5 984,770.5 985,770.9 986,770.9 987,770.9 988,769.7 989,771.0 990,771.0 991,771.1 992,770.5 993,770.6 994,769.6 995,770.6 996,771.0 997,770.5 998,769.6 999,770.9 1000,770.9 1001,771.0 1002,770.1 1003,770.3 1004,771.1 1005,770.2 1006,770.4 1007,771.2 1008,770.9 1009,770.6 1010,770.8 1011,771.2 1012,771.3 1013,771.0 1014,770.3 1015,771.2 1016,770.0 1017,770.4 1018,770.2 1019,771.0 1020,770.8 1021,770.8 1022,770.2 1023,769.1 1024,770.0 1025,771.1 1026,770.2 1027,770.9 1028,770.2 1029,771.0 1030,770.6 1031,770.7 1032,770.7 1033,770.0 1034,770.5 1035,769.0 1036,769.8 1037,770.4 1038,770.3 1039,770.8 1040,769.7 1041,770.0 1042,769.8 1043,770.6 1044,770.8 1045,770.0 1046,770.7 1047,769.6 1048,770.1 1049,769.9 1050,770.1 1051,769.7 1052,769.7 1053,769.7 1054,770.3 1055,770.1 1056,770.8 1057,770.2 1058,770.0 1059,769.5 1060,770.4 1061,770.8 1062,770.8 1063,770.1 1064,770.7 1065,770.1 1066,770.5 1067,770.3 1068,769.5 1069,770.7 1070,770.4 1071,770.2 1072,769.9 1073,769.9 1074,769.5 1075,770.0 1076,770.4 1077,770.6 1078,769.9 1079,769.8 1080,769.5 1081,769.5 1082,769.5 1083,769.8 1084,770.4 1085,770.2 1086,769.5 1087,770.1 1088,769.8 1089,769.7 1090,769.7 1091,770.3 1092,769.5 1093,770.6 1094,769.6 1095,770.6 1096,768.4 1097,769.4 1098,770.2 1099,770.5 1100,769.8 1101,769.6 1102,769.4 1103,769.7 1104,769.6 1105,770.3 1106,770.3 1107,770.4 1108,769.8 1109,769.9 1110,770.3 1111,769.8 1112,769.7 1113,769.6 1114,769.5 1115,770.5 1116,769.9 1117,769.9 1118,769.9 1119,769.5 1120,769.9 1121,770.1 1122,770.0 1123,769.7 1124,769.3 1125,770.4 1126,770.4 1127,770.4 1128,770.4 1129,770.4 1130,769.4 1131,769.9 1132,769.2 1133,769.3 1134,769.7 1135,769.5 1136,770.3 1137,770.2 1138,769.4 1139,770.0 1140,769.4 1141,769.7 1142,769.4 1143,770.0 1144,770.2 1145,769.3 1146,769.4 1147,769.4 1148,769.4 1149,769.4 1150,769.3 1151,769.6 1152,769.7 1153,769.4 1154,770.1 1155,769.4 1156,769.5 1157,769.4 1158,769.3 1159,770.0 1160,769.6 1161,769.9 1162,769.9 1163,770.2 1164,769.8 1165,769.7 1166,770.1 1167,769.2 1168,769.5 1169,770.0 1170,769.7 1171,769.1 1172,769.2 1173,769.9 1174,769.7 1175,769.7 1176,769.5 1177,770.0 1178,769.7 1179,769.4 1180,769.7 1181,770.1 1182,769.4 1183,768.2 1184,770.2 1185,770.1 1186,769.9 1187,770.1 1188,770.1 1189,769.9 1190,769.7 1191,769.7 1192,770.1 1193,769.8 1194,769.4 1195,768.7 1196,769.8 1197,769.7 1198,769.3 1199,769.2 1200,769.9 1201,770.1 1202,770.3 1203,769.8 1204,769.1 1205,769.8 1206,769.8 1207,769.6 1208,770.1 1209,770.2 1210,770.2 1211,769.1 1212,770.2 1213,769.3 1214,769.1 1215,769.3 1216,769.4 1217,770.0 1218,769.8 1219,769.9 1220,769.4 1221,769.8 1222,768.5 1223,769.5 1224,769.8 1225,769.1 1226,769.8 1227,769.2 1228,769.7 1229,769.7 1230,769.5 1231,769.1 1232,769.0 1233,769.9 1234,769.6 1235,769.1 1236,769.5 1237,769.0 1238,769.9 1239,769.3 1240,770.1 1241,769.4 1242,769.0 1243,769.2 1244,769.7 1245,769.3 1246,769.0 1247,769.4 1248,770.2 1249,768.2 1250,769.3 1251,770.0 1252,770.0 1253,769.0 1254,769.1 1255,769.0 1256,769.1 1257,769.2 1258,769.6 1259,770.0 1260,770.0 1261,769.9 1262,769.5 1263,769.0 1264,769.0 1265,770.2 1266,769.4 1267,769.8 1268,769.1 1269,769.8 1270,769.2 1271,769.6 1272,769.3 1273,768.4 1274,769.0 1275,769.7 1276,770.2 1277,770.1 1278,769.5 1279,769.3 1280,770.1 1281,769.7 1282,768.9 1283,769.3 1284,769.9 1285,769.4 1286,769.5 1287,769.3 1288,769.2 1289,770.1 1290,769.2 1291,769.6 1292,770.0 1293,770.1 1294,769.5 1295,769.8 1296,769.6 1297,769.1 1298,770.1 1299,769.2 1300,769.3 1301,768.1 1302,769.9 1303,769.8 1304,769.7 1305,770.1 1306,770.1 1307,769.3 1308,769.0 1309,769.6 1310,769.4 1311,769.1 1312,769.4 1313,769.7 1314,768.7 1315,769.1 1316,769.3 1317,769.3 1318,768.9 1319,769.1 1320,768.9 1321,769.5 1322,769.4 1323,769.5 1324,769.5 1325,769.2 1326,769.5 1327,769.2 1328,769.9 1329,769.7 1330,769.9 1331,769.3 1332,768.8 1333,769.3 1334,769.7 1335,769.5 1336,769.2 1337,769.6 1338,769.9 1339,769.1 1340,769.6 1341,770.0 1342,769.4 1343,768.8 1344,769.7 1345,770.1 1346,769.9 1347,769.4 1348,769.7 1349,770.0 1350,769.7 1351,769.8 1352,768.8 1353,769.8 1354,770.1 1355,769.1 1356,769.1 1357,769.6 1358,769.0 1359,769.7 1360,769.2 1361,769.5 1362,769.9 1363,769.3 1364,768.9 1365,769.4 1366,769.7 1367,769.6 1368,769.6 1369,769.5 1370,770.1 1371,769.2 1372,769.9 1373,769.3 1374,769.5 1375,769.5 1376,769.2 1377,769.4 1378,769.4 1379,768.9 1380,768.4 1381,769.2 1382,769.0 1383,769.5 1384,769.0 1385,770.1 1386,769.3 1387,769.8 1388,768.8 1389,768.9 1390,770.0 1391,769.0 1392,769.1 1393,769.7 1394,769.2 1395,768.9 1396,770.1 1397,769.6 1398,769.2 1399,768.9 1400,769.8 1401,770.0 1402,769.6 1403,770.1 1404,769.4 1405,769.1 1406,769.2 1407,768.9 1408,769.4 1409,769.6 1410,769.8 1411,769.4 1412,768.9 1413,769.4 1414,769.2 1415,769.6 1416,769.2 1417,770.0 1418,769.8 1419,769.5 1420,769.6 1421,768.9 1422,769.2 1423,770.0 1424,769.6 1425,769.4 1426,769.0 1427,768.9 1428,769.5 1429,769.0 1430,767.9 1431,769.0 1432,769.2 1433,769.2 1434,769.7 1435,769.2 1436,769.4 1437,770.0 1438,769.6 1439,769.5 1440,768.8 1441,768.8 1442,769.6 1443,770.0 1444,769.5 1445,769.4 1446,769.8 1447,769.5 1448,769.2 1449,769.7 1450,769.9 1451,769.8 1452,769.4 1453,769.8 1454,769.1 1455,769.3 1456,769.2 1457,769.4 1458,769.3 1459,770.0 1460,769.9 1461,769.6 1462,768.8 1463,769.7 1464,768.8 1465,770.0 1466,769.3 1467,770.0 1468,769.2 1469,768.8 1470,769.2 1471,769.3 1472,768.8 1473,769.0 1474,768.9 1475,769.1 1476,769.0 1477,769.9 1478,769.6 1479,769.8 1480,769.7 1481,769.5 1482,768.7 1483,768.8 1484,769.3 1485,768.8 1486,769.9 1487,769.0 1488,769.9 1489,769.8 1490,769.3 1491,769.3 1492,769.9 1493,769.2 1494,769.5 1495,769.9 1496,769.2 1497,769.4 1498,769.5 1499,768.8 1500,770.0 1501,769.5 1502,769.8 1503,769.2 1504,768.8 1505,769.0 1506,769.2 1507,768.4 1508,769.3 1509,769.4 1510,769.0 1511,768.9 1512,768.9 1513,769.0 1514,769.6 1515,769.6 1516,768.9 1517,769.5 1518,769.3 1519,769.1 1520,768.0 1521,769.2 1522,769.8 1523,769.6 1524,768.8 1525,769.6 1526,769.1 1527,769.4 1528,769.5 1529,769.6 1530,769.1 1531,769.4 1532,769.8 1533,770.1 1534,769.1 1535,768.8 1536,769.6 1537,769.3 1538,769.9 1539,769.1 1540,769.1 1541,769.1 1542,769.9 1543,770.0 1544,769.9 1545,769.5 1546,769.7 1547,769.4 1548,769.7 1549,769.6 1550,769.4 1551,769.5 1552,769.7 1553,769.8 1554,769.6 1555,769.9 1556,769.2 1557,769.5 1558,768.8 1559,768.9 1560,767.9 1561,769.6 1562,769.4 1563,769.1 1564,769.6 1565,768.8 1566,770.0 1567,768.8 1568,769.8 1569,769.5 1570,769.5 1571,770.0 1572,768.9 1573,769.3 1574,769.2 1575,769.0 1576,769.2 1577,770.0 1578,769.5 1579,769.0 1580,769.0 1581,769.3 1582,769.3 1583,769.7 1584,768.9 1585,769.7 1586,769.6 1587,768.8 1588,768.0 1589,769.0 1590,769.3 1591,769.0 1592,769.7 1593,769.5 1594,769.3 1595,769.6 1596,769.1 1597,769.9 1598,769.7 1599,768.8 1600,769.3 1601,770.0 1602,769.5 1603,768.7 1604,769.8 1605,769.8 1606,769.6 1607,769.6 1608,769.4 1609,769.2 1610,770.0 1611,768.9 1612,769.8 1613,769.8 1614,769.9 1615,769.0 1616,769.9 1617,768.8 1618,769.6 1619,769.3 1620,769.0 1621,768.8 1622,769.6 1623,770.0 1624,769.4 1625,770.0 1626,769.1 1627,768.8 1628,768.3 1629,769.3 1630,768.8 1631,768.7 1632,768.9 1633,769.5 1634,770.0 1635,768.9 1636,769.4 1637,769.0 1638,769.7 1639,769.3 1640,768.7 1641,769.6 1642,768.8 1643,769.1 1644,769.8 1645,769.8 1646,768.7 1647,769.1 1648,769.3 1649,769.2 1650,769.3 1651,769.5 1652,769.5 1653,770.0 1654,769.2 1655,768.9 1656,768.7 1657,769.7 1658,769.4 1659,768.9 1660,768.7 1661,769.9 1662,769.2 1663,769.2 1664,769.7 1665,769.7 1666,769.4 1667,769.6 1668,769.2 1669,769.2 1670,769.3 1671,768.8 1672,769.7 1673,769.4 1674,769.8 1675,769.0 1676,769.0 1677,769.7 1678,769.5 1679,769.5 1680,769.7 1681,768.4 1682,769.9 1683,769.3 1684,769.6 1685,769.1 1686,770.0 1687,768.9 1688,768.7 1689,768.7 1690,769.2 1691,769.9 1692,769.2 1693,769.9 1694,769.6 1695,769.7 1696,769.3 1697,769.8 1698,769.3 1699,769.9 1700,769.8 1701,769.6 1702,769.1 1703,769.1 1704,769.5 1705,769.3 1706,769.6 1707,769.0 1708,769.8 1709,769.6 1710,769.1 1711,769.6 1711,775.0 1710,775.0 1709,774.7 1708,774.1 1707,775.0 1706,775.1 1705,775.0 1704,774.5 1703,774.2 1702,774.5 1701,774.9 1700,775.0 1699,774.0 1698,775.2 1697,774.7 1696,775.1 1695,774.8 1694,774.6 1693,774.1 1692,774.4 1691,775.1 1690,775.2 1689,775.1 1688,775.4 1687,774.6 1686,774.3 1685,774.9 1684,775.0 1683,774.3 1682,774.3 1681,774.9 1680,774.4 1679,774.6 1678,774.2 1677,774.7 1676,774.6 1675,774.6 1674,774.4 1673,774.2 1672,774.2 1671,774.3 1670,774.4 1669,774.1 1668,774.5 1667,775.3 1666,774.3 1665,774.8 1664,775.0 1663,774.8 1662,775.2 1661,774.1 1660,774.6 1659,774.2 1658,774.3 1657,774.9 1656,775.2 1655,774.4 1654,775.2 1653,774.5 1652,775.3 1651,774.5 1650,774.6 1649,774.7 1648,775.2 1647,774.9 1646,774.3 1645,775.1 1644,774.8 1643,774.4 1642,775.2 1641,775.5 1640,774.0 1639,774.7 1638,774.6 1637,775.2 1636,774.2 1635,774.1 1634,774.2 1633,774.0 1632,774.8 1631,774.3 1630,774.1 1629,775.3 1628,775.2 1627,774.9 1626,775.3 1625,774.1 1624,774.4 1623,774.5 1622,774.6 1621,775.0 1620,774.8 1619,774.2 1618,775.2 1617,774.5 1616,775.0 1615,774.8 1614,774.7 1613,774.1 1612,774.6 1611,774.7 1610,774.3 1609,775.2 1608,774.2 1607,775.1 1606,775.0 1605,774.8 1604,774.5 1603,775.2 1602,774.1 1601,774.5 1600,775.3 1599,775.0 1598,774.4 1597,774.2 1596,774.3 1595,774.2 1594,775.0 1593,774.9 1592,775.0 1591,775.6 1590,775.6 1589,774.3 1588,774.7 1587,776.2 1586,774.8 1585,774.4 1584,775.0 1583,774.1 1582,774.2 1581,775.3 1580,774.9 1579,775.0 1578,774.3 1577,774.9 1576,774.1 1575,774.1 1574,774.5 1573,774.1 1572,775.1 1571,774.5 1570,774.8 1569,774.5 1568,774.8 1567,774.5 1566,774.8 1565,774.5 1564,774.8 1563,775.3 1562,774.3 1561,774.3 1560,775.2 1559,775.2 1558,775.3 1557,775.2 1556,774.7 1555,775.0 1554,775.2 1553,775.3 1552,774.7 1551,775.2 1550,775.2 1549,775.2 1548,775.0 1547,774.2 1546,775.0 1545,774.1 1544,774.9 1543,774.2 1542,775.2 1541,775.1 1540,774.2 1539,774.2 1538,775.2 1537,774.4 1536,774.9 1535,775.1 1534,774.9 1533,775.1 1532,775.1 1531,775.1 1530,774.2 1529,774.2 1528,775.3 1527,774.3 1526,774.1 1525,774.3 1524,774.7 1523,775.3 1522,774.7 1521,774.4 1520,776.0 1519,774.1 1518,774.9 1517,775.0 1516,776.3 1515,775.3 1514,775.1 1513,774.4 1512,774.4 1511,776.0 1510,774.2 1509,774.2 1508,774.8 1507,774.6 1506,775.2 1505,774.6 1504,775.4 1503,774.5 1502,774.7 1501,775.1 1500,774.6 1499,774.2 1498,774.9 1497,775.3 1496,774.2 1495,775.1 1494,775.1 1493,775.3 1492,775.0 1491,775.3 1490,775.3 1489,774.8 1488,774.4 1487,774.8 1486,774.1 1485,775.4 1484,774.4 1483,774.2 1482,775.3 1481,774.1 1480,775.5 1479,774.5 1478,774.3 1477,774.8 1476,775.2 1475,774.5 1474,775.2 1473,775.0 1472,775.4 1471,774.3 1470,774.9 1469,774.6 1468,774.1 1467,774.2 1466,774.7 1465,774.3 1464,775.1 1463,774.9 1462,775.4 1461,775.2 1460,774.7 1459,774.7 1458,774.4 1457,774.6 1456,775.0 1455,774.2 1454,775.3 1453,776.1 1452,775.2 1451,774.2 1450,774.1 1449,774.1 1448,775.3 1447,774.5 1446,775.5 1445,775.3 1444,774.4 1443,775.2 1442,774.4 1441,774.9 1440,774.7 1439,774.8 1438,774.6 1437,774.1 1436,774.2 1435,775.1 1434,774.5 1433,774.1 1432,774.4 1431,774.3 1430,774.9 1429,774.6 1428,774.4 1427,775.0 1426,774.3 1425,774.7 1424,774.2 1423,774.6 1422,775.4 1421,774.5 1420,775.0 1419,774.5 1418,774.4 1417,776.1 1416,774.8 1415,774.2 1414,774.8 1413,775.1 1412,775.1 1411,774.1 1410,774.8 1409,774.3 1408,774.4 1407,774.2 1406,774.7 1405,775.2 1404,774.9 1403,774.4 1402,774.4 1401,774.9 1400,774.6 1399,774.8 1398,774.8 1397,774.6 1396,775.1 1395,774.8 1394,774.4 1393,775.2 1392,774.4 1391,775.0 1390,774.8 1389,775.1 1388,775.1 1387,775.3 1386,774.3 1385,774.2 1384,775.3 1383,775.0 1382,774.1 1381,775.2 1380,775.3 1379,775.0 1378,774.6 1377,774.7 1376,774.9 1375,774.3 1374,774.8 1373,774.9 1372,775.0 1371,774.7 1370,775.4 1369,774.6 1368,774.4 1367,775.0 1366,775.4 1365,774.6 1364,774.3 1363,774.5 1362,774.6 1361,774.6 1360,775.4 1359,774.8 1358,774.3 1357,774.3 1356,774.5 1355,774.9 1354,774.4 1353,774.8 1352,775.2 1351,774.5 1350,774.3 1349,774.6 1348,774.9 1347,775.5 1346,775.3 1345,774.9 1344,775.0 1343,774.6 1342,774.2 1341,774.7 1340,775.2 1339,775.3 1338,774.5 1337,774.6 1336,775.3 1335,774.5 1334,775.2 1333,775.2 1332,775.4 1331,774.5 1330,775.0 1329,775.1 1328,774.6 1327,774.8 1326,774.5 1325,774.5 1324,775.2 1323,775.0 1322,774.5 1321,774.7 1320,774.4 1319,775.4 1318,775.4 1317,774.6 1316,774.7 1315,774.4 1314,774.3 1313,774.5 1312,774.6 1311,775.5 1310,774.2 1309,775.1 1308,774.8 1307,775.2 1306,774.8 1305,775.5 1304,774.8 1303,775.1 1302,775.1 1301,774.5 1300,775.1 1299,774.9 1298,774.6 1297,774.4 1296,774.3 1295,775.4 1294,774.5 1293,774.8 1292,774.3 1291,775.4 1290,775.1 1289,774.7 1288,775.3 1287,774.8 1286,774.7 1285,774.4 1284,774.4 1283,774.7 1282,775.1 1281,775.5 1280,774.6 1279,775.3 1278,775.5 1277,774.6 1276,774.5 1275,775.0 1274,775.9 1273,774.3 1272,775.5 1271,775.3 1270,774.9 1269,774.5 1268,774.7 1267,775.1 1266,775.5 1265,774.4 1264,774.9 1263,774.4 1262,775.4 1261,775.0 1260,774.8 1259,775.0 1258,775.5 1257,775.2 1256,774.4 1255,775.1 1254,775.4 1253,775.3 1252,774.7 1251,775.3 1250,774.7 1249,774.9 1248,774.4 1247,774.6 1246,775.2 1245,776.0 1244,774.9 1243,774.8 1242,774.8 1241,774.7 1240,775.2 1239,775.2 1238,775.4 1237,775.3 1236,775.0 1235,774.5 1234,775.5 1233,774.5 1232,774.7 1231,775.3 1230,774.8 1229,775.5 1228,775.0 1227,774.3 1226,774.3 1225,774.5 1224,775.5 1223,775.4 1222,774.8 1221,774.4 1220,774.5 1219,775.5 1218,774.8 1217,775.2 1216,774.4 1215,775.3 1214,775.1 1213,774.8 1212,774.8 1211,775.0 1210,775.2 1209,774.5 1208,774.3 1207,774.7 1206,774.8 1205,775.3 1204,774.9 1203,774.7 1202,774.9 1201,775.5 1200,775.0 1199,775.1 1198,774.5 1197,775.0 1196,775.5 1195,775.4 1194,774.5 1193,774.9 1192,775.2 1191,775.1 1190,774.9 1189,774.6 1188,774.4 1187,775.1 1186,774.6 1185,775.2 1184,775.4 1183,775.6 1182,774.7 1181,775.3 1180,775.1 1179,774.7 1178,774.4 1177,774.9 1176,774.9 1175,775.1 1174,775.5 1173,775.5 1172,775.4 1171,775.4 1170,774.6 1169,774.6 1168,774.6 1167,775.0 1166,775.4 1165,775.4 1164,775.0 1163,774.4 1162,775.7 1161,775.3 1160,775.1 1159,775.2 1158,775.6 1157,774.8 1156,775.0 1155,774.5 1154,775.8 1153,774.7 1152,774.9 1151,774.5 1150,775.7 1149,775.5 1148,775.1 1147,775.3 1146,775.4 1145,774.8 1144,775.0 1143,775.0 1142,774.8 1141,775.7 1140,774.5 1139,775.0 1138,774.7 1137,775.8 1136,774.9 1135,774.7 1134,775.1 1133,775.1 1132,774.8 1131,774.7 1130,774.7 1129,774.7 1128,775.5 1127,774.6 1126,775.5 1125,775.3 1124,775.8 1123,775.1 1122,775.7 1121,775.5 1120,775.4 1119,774.6 1118,775.5 1117,774.7 1116,775.8 1115,775.6 1114,775.0 1113,775.5 1112,774.8 1111,774.8 1110,775.4 1109,774.6 1108,774.9 1107,775.3 1106,775.4 1105,775.6 1104,774.7 1103,775.5 1102,774.7 1101,775.2 1100,774.9 1099,774.8 1098,775.2 1097,775.1 1096,774.8 1095,775.0 1094,774.9 1093,775.6 1092,775.4 1091,775.7 1090,774.9 1089,775.5 1088,775.2 1087,776.2 1086,775.1 1085,774.8 1084,774.7 1083,774.9 1082,775.7 1081,775.2 1080,775.0 1079,775.6 1078,774.7 1077,775.5 1076,775.4 1075,775.6 1074,774.9 1073,775.8 1072,774.9 1071,775.9 1070,776.0 1069,775.8 1068,776.0 1067,775.7 1066,775.6 1065,776.9 1064,775.0 1063,775.0 1062,775.2 1061,775.0 1060,775.3 1059,775.1 1058,775.9 1057,775.5 1056,775.2 1055,775.4 1054,775.1 1053,776.1 1052,775.2 1051,776.0 1050,775.1 1049,775.2 1048,774.9 1047,776.0 1046,775.4 1045,775.5 1044,776.1 1043,776.1 1042,776.2 1041,776.1 1040,775.0 1039,775.4 1038,775.3 1037,775.1 1036,775.5 1035,775.8 1034,775.8 1033,775.2 1032,775.4 1031,775.7 1030,775.2 1029,775.2 1028,775.3 1027,776.3 1026,775.9 1025,776.3 1024,776.0 1023,776.2 1022,776.4 1021,776.0 1020,775.4 1019,776.4 1018,775.7 1017,775.6 1016,776.0 1015,775.5 1014,775.6 1013,776.2 1012,776.2 1011,775.7 1010,776.2 1009,776.0 1008,776.6 1007,775.8 1006,776.4 1005,775.8 1004,775.4 1003,776.4 1002,776.6 1001,775.6 1000,775.8 999,775.7 998,776.4 997,776.7 996,776.3 995,776.2 994,775.6 993,776.3 992,776.0 991,776.5 990,776.9 989,776.4 988,776.7 987,777.0 986,776.6 985,776.3 984,775.7 983,775.8 982,775.9 981,776.7 980,776.9 979,776.0 978,776.7 977,775.8 976,776.8 975,776.1 974,776.0 973,776.1 972,776.4 971,776.4 970,776.5 969,776.0 968,776.2 967,776.7 966,777.1 965,777.0 964,776.2 963,777.0 962,777.2 961,776.0 960,776.7 959,776.6 958,776.7 957,776.2 956,776.6 955,777.4 954,776.5 953,776.2 952,777.2 951,777.5 950,776.6 949,777.0 948,776.9 947,777.3 946,777.0 945,777.7 944,776.8 943,777.3 942,777.1 941,776.6 940,776.9 939,777.1 938,776.8 937,777.4 936,776.9 935,777.8 934,777.8 933,777.1 932,777.6 931,777.8 930,777.7 929,778.1 928,777.2 927,777.3 926,777.9 925,777.1 924,778.0 923,777.4 922,777.6 921,778.2 920,778.0 919,777.8 918,777.4 917,777.8 916,779.3 915,778.1 914,778.5 913,778.5 912,778.4 911,777.9 910,778.2 909,778.2 908,778.0 907,778.2 906,778.9 905,778.1 904,778.7 903,779.0 902,779.1 901,778.8 900,779.0 899,779.9 898,779.5 897,780.2 896,779.0 895,778.5 894,779.7 893,779.4 892,779.2 891,779.8 890,779.8 889,779.1 888,779.0 887,779.9 886,780.1 885,779.7 884,780.2 883,779.1 882,780.0 881,779.4 880,779.8 879,780.2 878,779.6 877,780.7 876,780.6 875,781.1 874,780.4 873,780.7 872,780.4 871,781.5 870,781.6 869,781.5 868,781.6 867,781.7 866,782.0 865,780.9 864,781.2 863,782.0 862,782.4 861,781.4 860,782.1 859,781.8 858,783.5 857,782.5 856,783.7 855,782.6 854,782.5 853,782.5 852,782.1 851,782.7 850,782.1 849,782.4 848,782.5 847,782.5 846,783.0 845,782.6 844,783.0 843,783.5 842,782.9 841,782.8 840,783.6 839,783.3 838,783.3 837,784.9 836,784.0 835,784.4 834,783.5 833,784.1 832,784.5 831,784.8 830,784.8 829,784.7 828,784.2 827,785.4 826,785.2 825,784.9 824,784.7 823,784.5 822,784.8 821,785.6 820,785.9 819,785.2 818,785.9 817,785.8 816,786.8 815,785.8 814,786.3 813,785.8 812,786.2 811,786.8 810,786.5 809,786.5 808,787.0 807,786.1 806,787.2 805,786.6 804,786.7 803,787.7 802,786.6 801,786.7 800,786.9 799,787.0 798,787.8 797,787.9 796,787.7 795,788.3 794,787.4 793,788.1 792,788.0 791,788.9 790,788.3 789,788.4 788,788.6 787,789.2 786,789.1 785,788.8 784,788.6 783,790.0 782,789.4 781,789.8 780,789.8 779,789.6 778,789.3 777,790.3 776,791.4 775,790.1 774,790.7 773,790.9 772,790.5 771,790.3 770,790.9 769,790.9 768,791.3 767,791.2 766,790.5 765,791.5 764,792.8 763,791.1 762,791.3 761,793.3 760,791.7 759,791.9 758,792.4 757,792.5 756,792.3 755,792.3 754,793.2 753,793.4 752,793.0 751,792.7 750,792.8 749,792.8 748,793.5 747,793.3 746,794.1 745,794.2 744,793.6 743,793.7 742,794.8 741,794.3 740,794.7 739,794.3 738,794.6 737,795.5 736,794.8 735,795.7 734,795.2 733,796.2 732,795.2 731,795.3 730,795.8 729,796.3 728,796.7 727,796.8 726,797.2 725,796.2 724,797.2 723,797.4 722,797.6 721,797.3 720,797.9 719,798.0 718,797.9 717,798.4 716,797.7 715,798.4 714,799.0 713,798.7 712,798.1 711,799.1 710,798.8 709,799.6 708,799.1 707,799.6 706,799.8 705,799.6 704,799.5 703,800.6 702,800.1 701,800.5 700,801.1 699,801.0 698,800.4 697,800.9 696,800.9 695,801.2 694,800.8 693,801.7 692,801.5 691,802.3 690,802.2 689,802.3 688,802.4 687,802.2 686,802.1 685,803.5 684,802.9 683,802.7 682,802.9 681,804.0 680,803.6 679,803.4 678,804.0 677,805.6 676,804.8 675,804.3 674,804.2 673,805.4 672,805.4 671,805.4 670,806.7 669,805.3 668,805.7 667,806.7 666,806.9 665,806.2 664,806.4 663,807.3 662,807.0 661,808.0 660,807.6 659,807.6 658,807.4 657,808.1 656,808.0 655,809.1 654,808.8 653,808.8 652,809.4 651,809.1 650,810.1 649,810.0 648,810.5 647,810.7 646,809.9 645,810.2 644,810.9 643,810.9 642,811.4 641,812.4 640,811.8 639,811.9 638,811.4 637,812.5 636,812.3 635,812.2 634,813.0 633,813.2 632,813.4 631,813.6 630,813.0 629,813.7 628,814.7 627,813.4 626,813.6 625,814.6 624,814.3 623,814.3 622,814.7 621,815.4 620,814.8 619,815.2 618,815.3 617,815.8 616,816.2 615,816.0 614,816.3 613,816.1 612,817.9 611,816.7 610,817.1 609,817.7 608,817.0 607,817.7 606,817.3 605,817.2 604,818.6 603,818.9 602,818.6 601,818.7 600,818.4 599,819.2 598,818.5 597,819.6 596,819.3 595,818.9 594,820.2 593,819.6 592,819.8 591,820.0 590,820.1 589,820.4 588,820.5 587,820.9 586,821.2 585,821.7 584,821.3 583,821.1 582,821.5 581,821.8 580,821.5 579,822.4 578,821.9 577,822.0 576,822.7 575,823.4 574,822.6 573,822.9 572,823.0 571,823.6 570,823.4 569,824.4 568,824.1 567,824.0 566,823.7 565,824.7 564,824.9 563,824.8 562,825.3 561,825.2 560,824.9 559,825.6 558,824.9 557,825.6 556,825.7 555,825.6 554,825.7 553,826.7 552,826.5 551,826.2 550,827.4 549,827.5 548,826.9 547,827.4 546,827.1 545,827.5 544,828.2 543,828.0 542,828.5 541,828.6 540,827.7 539,828.3 538,828.3 537,828.9 536,828.9 535,829.0 534,829.4 533,829.7 532,829.7 531,829.9 530,829.4 529,830.4 528,829.8 527,830.6 526,829.9 525,830.4 524,829.9 523,830.3 522,830.9 521,830.5 520,831.5 519,830.9 518,830.9 517,831.2 516,831.1 515,832.4 514,832.1 513,832.3 512,833.6 511,832.9 510,831.8 509,832.6 508,832.4 507,832.3 506,833.4 505,832.8 504,833.2 503,833.3 502,833.9 501,833.8 500,833.6 499,833.4 498,834.4 497,833.6 496,833.8 495,834.1 494,835.6 493,835.4 492,834.8 491,835.5 490,835.2 489,835.2 488,835.1 487,836.2 486,836.3 485,837.2 484,835.7 483,836.4 482,836.6 481,836.8 480,836.8 479,836.5 478,837.4 477,838.7 476,838.7 475,838.1 474,837.3 473,838.0 472,837.4 471,837.6 470,837.7 469,837.9 468,839.0 467,839.1 466,839.2 465,838.5 464,838.7 463,839.5 462,839.0 461,839.2 460,839.8 459,840.1 458,840.1 457,841.4 456,839.9 455,841.0 454,840.7 453,840.3 452,840.9 451,840.9 450,841.4 449,841.8 448,841.9 447,841.6 446,841.0 445,841.9 444,841.4 443,842.5 442,842.0 441,841.9 440,842.9 439,842.9 438,843.1 437,842.8 436,843.5 435,843.2 434,843.5 433,843.5 432,842.9 431,843.6 430,844.2 429,843.8 428,844.2 427,844.0 426,843.8 425,845.1 424,844.8 423,844.3 422,844.7 421,844.6 420,845.6 419,846.5 418,845.4 417,845.9 416,845.2 415,846.2 414,845.5 413,845.5 412,846.5 411,847.1 410,846.0 409,847.2 408,846.3 407,846.8 406,847.3 405,847.6 404,848.0 403,847.9 402,848.0 401,848.5 400,848.6 399,847.6 398,847.8 397,848.2 396,848.9 395,848.8 394,849.4 393,848.7 392,849.1 391,849.7 390,849.5 389,849.9 388,850.0 387,849.8 386,850.0 385,850.3 384,850.3 383,850.2 382,850.6 381,850.4 380,851.1 379,850.6 378,851.0 377,850.8 376,850.8 375,851.1 374,851.2 373,852.1 372,851.8 371,851.5 370,852.1 369,852.9 368,852.5 367,852.5 366,852.8 365,852.5 364,852.8 363,852.9 362,853.3 361,853.2 360,853.2 359,853.4 358,854.4 357,854.1 356,854.8 355,853.8 354,854.9 353,854.8 352,854.6 351,855.2 350,854.7 349,855.5 348,855.4 347,855.3 346,855.2 345,855.6 344,855.3 343,855.1 342,856.0 341,855.2 340,856.5 339,856.0 338,855.6 337,855.7 336,855.7 335,855.8 334,855.8 333,856.6 332,855.9 331,856.8 330,857.7 329,856.2 328,856.6 327,855.9 326,856.1 325,856.2 324,856.4 323,856.8 322,856.9 321,856.6 320,856.5 319,857.0 318,856.4 317,855.9 316,856.9 315,856.7 314,857.0 313,856.0 312,856.0 311,856.4 310,856.8 309,856.8 308,856.0 307,856.0 306,856.6 305,856.8 304,856.8 303,856.2 302,856.9 301,856.2 300,857.2 299,856.9 298,856.8 297,856.3 296,856.2 295,856.9 294,856.9 293,856.3 292,856.6 291,857.1 290,856.0 289,856.0 288,857.1 287,856.6 286,856.4 285,856.0 284,856.1 283,856.7 282,856.0 281,857.6 280,856.6 279,855.9 278,856.7 277,857.0 276,856.5 275,857.2 274,856.7 273,856.7 272,856.7 271,856.1 270,856.1 269,856.6 268,856.6 267,857.1 266,856.0 265,857.1 264,856.2 263,857.0 262,856.6 261,856.9 260,857.5 259,856.1 258,856.5 257,856.5 256,856.5 255,856.4 254,856.7 253,857.8 252,856.8 251,856.6 250,857.0 249,856.9 248,857.1 247,857.4 246,856.2 245,856.0 244,856.1 243,856.0 242,855.9 241,856.4 240,855.9 239,856.4 238,856.4 237,856.3 236,856.1 235,856.4 234,856.9 233,856.8 232,856.7 231,856.1 230,856.7 229,856.2 228,857.1 227,856.1 226,857.0 225,857.2 224,856.6 223,856.7 222,856.2 221,856.6 220,856.8 219,856.7 218,856.8 217,856.2 216,856.3 215,856.2 214,856.9 213,856.7 212,856.9 211,856.5 210,857.1 209,858.0 208,855.9 207,856.2 206,856.3 205,857.1 204,857.8 203,858.0 202,856.4 201,857.0 200,857.2 199,856.3 198,856.4 197,857.8 196,857.1 195,857.1 194,857.0 193,856.1 192,856.2 191,856.3 190,857.0 189,856.6 188,856.8 187,857.1 186,856.4 185,857.2 184,856.2 183,857.1 182,857.6 181,856.6 180,856.7 179,856.7 178,856.0 177,856.7 176,856.6 175,857.2 174,856.4 173,857.1 172,857.9 171,856.4 170,857.0 169,857.2 168,856.4 167,856.9 166,856.2 165,856.2 164,857.1 163,856.2 162,856.6 161,857.2 160,856.5 159,857.2 158,856.9 157,857.1 156,857.0 155,856.6 154,856.3 153,857.2 152,857.2 151,857.1 150,857.0 149,856.3 148,856.5 147,857.4 146,857.1 145,857.1 144,856.2 143,856.5 142,855.9 141,857.1 140,856.6 139,856.8 138,857.5 137,856.1 136,856.9 135,856.5 134,856.8 133,856.9 132,856.6 131,857.4 130,856.6 129,856.1 128,856.8 127,856.9 126,856.1 125,857.1 124,856.8 123,856.4 122,856.9 121,856.3 120,856.0 119,856.2 118,855.9 117,856.2 116,856.2 115,856.3 114,857.0 113,856.2 112,856.0 111,856.8 110,856.8 109,856.5 108,857.1 107,856.9 106,857.3 105,856.9 104,856.0 103,856.6 102,856.6 101,856.0 100,856.7 99,856.8 98,856.6 97,857.0 96,856.3 95,856.0 94,856.0 93,855.9 92,857.7 91,856.6 90,857.2 89,856.2 88,856.8 87,856.9 86,856.0 85,857.0 84,857.1 83,856.5 82,856.6 81,857.1 80,856.9 79,856.0 78,856.3 77,856.1 76,856.5 75,856.6 74,856.7 73,856.1 72,856.2 71,857.0 70,856.6 69,857.0 68,857.2 67,857.1 66,856.8 65,857.2 64,856.1 63,857.1 62,856.7 61,856.7 60,856.2 59,857.1 58,856.2 57,857.3 56,857.0 55,857.0 54,856.6 53,856.2 52,856.6 51,856.6 50,857.0 49,856.0 48,857.0 47,856.2 46,855.9 45,855.9 44,856.2 43,856.0 42,857.0 41,857.7 40,857.1 39,855.9 38,856.2 37,857.1 36,856.3 35,856.6 34,856.4 33,856.0 32,855.9 31,857.0 30,856.0 29,857.0 28,856.8 27,856.9 26,856.1 25,857.2 24,856.6 23,856.9 22,856.3 21,856.0 20,856.7 19,856.3 18,857.0 17,856.7 16,856.1 15,856.0 14,856.0 13,856.7" fill="#8ccb30"/>
<line x1="13" y1="853.5" x2="1677" y2="853.5" stroke="#d8d8d8" stroke-width="1" stroke-dasharray="5 5" shape-rendering="crispEdges"/>
</g>
<g clip-path="url(#gc)">
<line x1="190" y1="798.5" x2="879" y2="798.5" stroke="#ec1010" stroke-width="1.4" stroke-dasharray="14 7"/>
<rect x="190" y="75" width="1.3" height="666" fill="#a8a8a8"/>
<rect x="883" y="75" width="1.3" height="666" fill="#a8a8a8"/>
<rect x="190" y="741" width="1.3" height="224" fill="#f2f2f2"/>
<rect x="883" y="741" width="1.3" height="224" fill="#f2f2f2"/>
</g>
<path d="M19.5 170.45 H43 Q45 170.45 46.5 171.95 L58.5 185.6 L46.5 199.25 Q45 200.75 43 200.75 H19.5 Q16.5 200.75 16.5 197.75 V173.45 Q16.5 170.45 19.5 170.45 Z" fill="#211d08" stroke="#d9cc2e" stroke-width="1.5" stroke-linejoin="round"/><text x="28.3" y="189.9" font-size="12.5" fill="#e8dc3a" letter-spacing="2.7">C1</text><text x="63" y="191.9" font-size="22.6" fill="#f0e228" letter-spacing="-1.5">EN1</text>
<path d="M19.5 392.45000000000005 H43 Q45 392.45000000000005 46.5 393.95000000000005 L58.5 407.6 L46.5 421.25 Q45 422.75 43 422.75 H19.5 Q16.5 422.75 16.5 419.75 V395.45000000000005 Q16.5 392.45000000000005 19.5 392.45000000000005 Z" fill="#06242a" stroke="#1fa6b4" stroke-width="1.5" stroke-linejoin="round"/><text x="28.3" y="411.90000000000003" font-size="12.5" fill="#34c8d6" letter-spacing="2.7">C2</text><text x="63" y="413.90000000000003" font-size="22.6" fill="#25cbdb" letter-spacing="-1.5">EN2</text>
<path d="M19.5 613.25 H43 Q45 613.25 46.5 614.75 L58.5 628.4 L46.5 642.05 Q45 643.55 43 643.55 H19.5 Q16.5 643.55 16.5 640.55 V616.25 Q16.5 613.25 19.5 613.25 Z" fill="#200c11" stroke="#cf3d5c" stroke-width="1.5" stroke-linejoin="round"/><text x="28.3" y="632.6999999999999" font-size="12.5" fill="#f4f4f4" letter-spacing="2.7">C3</text><text x="63" y="634.6999999999999" font-size="22.6" fill="#ea4668" letter-spacing="-0.75">S1-SM</text>
<path d="M19.5 838.6999999999999 H43 Q45 838.6999999999999 46.5 840.1999999999999 L58.5 853.3 L46.5 866.4 Q45 867.9 43 867.9 H19.5 Q16.5 867.9 16.5 864.9 V841.6999999999999 Q16.5 838.6999999999999 19.5 838.6999999999999 Z" fill="#8ccb30" stroke="#8ccb30" stroke-width="0.4" stroke-linejoin="round"/><text x="28.3" y="857.5999999999999" font-size="12.5" fill="#0c1404" letter-spacing="2.7">C4</text><text x="63" y="859.5999999999999" font-size="22.6" fill="#8ccb30" letter-spacing="-0.75">SM-S2</text>
<rect x="1682.5" y="90.3" width="25.5" height="14" fill="#000"/><text x="1707" y="102.3" font-size="14" text-anchor="end" fill="#ecdc22" stroke="#ecdc22" stroke-width=".5" paint-order="stroke" style="text-shadow:0 0 2px #000,0 0 2px #000">8 V</text><rect x="1682.5" y="112.4" width="25.5" height="14" fill="#000"/><text x="1707" y="124.4" font-size="14" text-anchor="end" fill="#ecdc22" stroke="#ecdc22" stroke-width=".5" paint-order="stroke" style="text-shadow:0 0 2px #000,0 0 2px #000">6 V</text><rect x="1682.5" y="134.5" width="25.5" height="14" fill="#000"/><text x="1707" y="146.5" font-size="14" text-anchor="end" fill="#ecdc22" stroke="#ecdc22" stroke-width=".5" paint-order="stroke" style="text-shadow:0 0 2px #000,0 0 2px #000">4 V</text><rect x="1682.5" y="156.6" width="25.5" height="14" fill="#000"/><text x="1707" y="168.6" font-size="14" text-anchor="end" fill="#ecdc22" stroke="#ecdc22" stroke-width=".5" paint-order="stroke" style="text-shadow:0 0 2px #000,0 0 2px #000">2 V</text><text x="1707" y="190.7" font-size="14" text-anchor="end" fill="#ecdc22" stroke="#ecdc22" stroke-width=".5" paint-order="stroke" style="text-shadow:0 0 2px #000,0 0 2px #000">0 V</text><rect x="1677.8" y="200.8" width="30.2" height="14" fill="#000"/><text x="1707" y="212.8" font-size="14" text-anchor="end" fill="#ecdc22" stroke="#ecdc22" stroke-width=".5" paint-order="stroke" style="text-shadow:0 0 2px #000,0 0 2px #000">-2 V</text><rect x="1677.8" y="222.9" width="30.2" height="14" fill="#000"/><text x="1707" y="234.9" font-size="14" text-anchor="end" fill="#ecdc22" stroke="#ecdc22" stroke-width=".5" paint-order="stroke" style="text-shadow:0 0 2px #000,0 0 2px #000">-4 V</text><rect x="1677.8" y="245.0" width="30.2" height="14" fill="#000"/><text x="1707" y="257.0" font-size="14" text-anchor="end" fill="#ecdc22" stroke="#ecdc22" stroke-width=".5" paint-order="stroke" style="text-shadow:0 0 2px #000,0 0 2px #000">-6 V</text><rect x="1677.8" y="267.1" width="30.2" height="14" fill="#000"/><text x="1707" y="279.1" font-size="14" text-anchor="end" fill="#ecdc22" stroke="#ecdc22" stroke-width=".5" paint-order="stroke" style="text-shadow:0 0 2px #000,0 0 2px #000">-8 V</text>
<rect x="1682.5" y="312.4" width="25.5" height="14" fill="#000"/><text x="1707" y="324.4" font-size="14" text-anchor="end" fill="#22c4d4" stroke="#22c4d4" stroke-width=".5" paint-order="stroke" style="text-shadow:0 0 2px #000,0 0 2px #000">8 V</text><rect x="1682.5" y="334.5" width="25.5" height="14" fill="#000"/><text x="1707" y="346.5" font-size="14" text-anchor="end" fill="#22c4d4" stroke="#22c4d4" stroke-width=".5" paint-order="stroke" style="text-shadow:0 0 2px #000,0 0 2px #000">6 V</text><rect x="1682.5" y="356.6" width="25.5" height="14" fill="#000"/><text x="1707" y="368.6" font-size="14" text-anchor="end" fill="#22c4d4" stroke="#22c4d4" stroke-width=".5" paint-order="stroke" style="text-shadow:0 0 2px #000,0 0 2px #000">4 V</text><rect x="1682.5" y="378.7" width="25.5" height="14" fill="#000"/><text x="1707" y="390.7" font-size="14" text-anchor="end" fill="#22c4d4" stroke="#22c4d4" stroke-width=".5" paint-order="stroke" style="text-shadow:0 0 2px #000,0 0 2px #000">2 V</text><text x="1707" y="412.8" font-size="14" text-anchor="end" fill="#22c4d4" stroke="#22c4d4" stroke-width=".5" paint-order="stroke" style="text-shadow:0 0 2px #000,0 0 2px #000">0 V</text><rect x="1677.8" y="422.9" width="30.2" height="14" fill="#000"/><text x="1707" y="434.9" font-size="14" text-anchor="end" fill="#22c4d4" stroke="#22c4d4" stroke-width=".5" paint-order="stroke" style="text-shadow:0 0 2px #000,0 0 2px #000">-2 V</text><rect x="1677.8" y="445.0" width="30.2" height="14" fill="#000"/><text x="1707" y="457.0" font-size="14" text-anchor="end" fill="#22c4d4" stroke="#22c4d4" stroke-width=".5" paint-order="stroke" style="text-shadow:0 0 2px #000,0 0 2px #000">-4 V</text><rect x="1677.8" y="467.1" width="30.2" height="14" fill="#000"/><text x="1707" y="479.1" font-size="14" text-anchor="end" fill="#22c4d4" stroke="#22c4d4" stroke-width=".5" paint-order="stroke" style="text-shadow:0 0 2px #000,0 0 2px #000">-6 V</text><rect x="1677.8" y="489.2" width="30.2" height="14" fill="#000"/><text x="1707" y="501.2" font-size="14" text-anchor="end" fill="#22c4d4" stroke="#22c4d4" stroke-width=".5" paint-order="stroke" style="text-shadow:0 0 2px #000,0 0 2px #000">-8 V</text>
<rect x="1674.7" y="532.7" width="33.3" height="14" fill="#000"/><text x="1707" y="544.7" font-size="14" text-anchor="end" fill="#e2405e" stroke="#e2405e" stroke-width=".5" paint-order="stroke" style="text-shadow:0 0 2px #000,0 0 2px #000">20 V</text><rect x="1674.7" y="554.8" width="33.3" height="14" fill="#000"/><text x="1707" y="566.8" font-size="14" text-anchor="end" fill="#e2405e" stroke="#e2405e" stroke-width=".5" paint-order="stroke" style="text-shadow:0 0 2px #000,0 0 2px #000">15 V</text><rect x="1674.7" y="576.9" width="33.3" height="14" fill="#000"/><text x="1707" y="588.9" font-size="14" text-anchor="end" fill="#e2405e" stroke="#e2405e" stroke-width=".5" paint-order="stroke" style="text-shadow:0 0 2px #000,0 0 2px #000">10 V</text><rect x="1682.5" y="598.9" width="25.5" height="14" fill="#000"/><text x="1707" y="610.9" font-size="14" text-anchor="end" fill="#e2405e" stroke="#e2405e" stroke-width=".5" paint-order="stroke" style="text-shadow:0 0 2px #000,0 0 2px #000">5 V</text><text x="1707" y="633.0" font-size="14" text-anchor="end" fill="#e2405e" stroke="#e2405e" stroke-width=".5" paint-order="stroke" style="text-shadow:0 0 2px #000,0 0 2px #000">0 V</text><rect x="1677.8" y="643.1" width="30.2" height="14" fill="#000"/><text x="1707" y="655.1" font-size="14" text-anchor="end" fill="#e2405e" stroke="#e2405e" stroke-width=".5" paint-order="stroke" style="text-shadow:0 0 2px #000,0 0 2px #000">-5 V</text><rect x="1670.0" y="665.2" width="38.0" height="14" fill="#000"/><text x="1707" y="677.2" font-size="14" text-anchor="end" fill="#e2405e" stroke="#e2405e" stroke-width=".5" paint-order="stroke" style="text-shadow:0 0 2px #000,0 0 2px #000">-10 V</text><rect x="1670.0" y="687.3" width="38.0" height="14" fill="#000"/><text x="1707" y="699.3" font-size="14" text-anchor="end" fill="#e2405e" stroke="#e2405e" stroke-width=".5" paint-order="stroke" style="text-shadow:0 0 2px #000,0 0 2px #000">-15 V</text><rect x="1670.0" y="709.3" width="38.0" height="14" fill="#000"/><text x="1707" y="721.3" font-size="14" text-anchor="end" fill="#e2405e" stroke="#e2405e" stroke-width=".5" paint-order="stroke" style="text-shadow:0 0 2px #000,0 0 2px #000">-20 V</text>
<rect x="1674.7" y="757.0" width="33.3" height="14" fill="#000"/><text x="1707" y="769.0" font-size="14" text-anchor="end" fill="#8ccb30" stroke="#8ccb30" stroke-width=".5" paint-order="stroke" style="text-shadow:0 0 2px #000,0 0 2px #000">20 V</text><rect x="1674.7" y="779.4" width="33.3" height="14" fill="#000"/><text x="1707" y="791.4" font-size="14" text-anchor="end" fill="#8ccb30" stroke="#8ccb30" stroke-width=".5" paint-order="stroke" style="text-shadow:0 0 2px #000,0 0 2px #000">15 V</text><rect x="1674.7" y="801.7" width="33.3" height="14" fill="#000"/><text x="1707" y="813.7" font-size="14" text-anchor="end" fill="#8ccb30" stroke="#8ccb30" stroke-width=".5" paint-order="stroke" style="text-shadow:0 0 2px #000,0 0 2px #000">10 V</text><rect x="1682.5" y="824.0" width="25.5" height="14" fill="#000"/><text x="1707" y="836.0" font-size="14" text-anchor="end" fill="#8ccb30" stroke="#8ccb30" stroke-width=".5" paint-order="stroke" style="text-shadow:0 0 2px #000,0 0 2px #000">5 V</text><text x="1707" y="858.4" font-size="14" text-anchor="end" fill="#8ccb30" stroke="#8ccb30" stroke-width=".5" paint-order="stroke" style="text-shadow:0 0 2px #000,0 0 2px #000">0 V</text><rect x="1677.8" y="868.8" width="30.2" height="14" fill="#000"/><text x="1707" y="880.8" font-size="14" text-anchor="end" fill="#8ccb30" stroke="#8ccb30" stroke-width=".5" paint-order="stroke" style="text-shadow:0 0 2px #000,0 0 2px #000">-5 V</text><rect x="1670.0" y="891.1" width="38.0" height="14" fill="#000"/><text x="1707" y="903.1" font-size="14" text-anchor="end" fill="#8ccb30" stroke="#8ccb30" stroke-width=".5" paint-order="stroke" style="text-shadow:0 0 2px #000,0 0 2px #000">-10 V</text><rect x="1670.0" y="913.5" width="38.0" height="14" fill="#000"/><text x="1707" y="925.5" font-size="14" text-anchor="end" fill="#8ccb30" stroke="#8ccb30" stroke-width=".5" paint-order="stroke" style="text-shadow:0 0 2px #000,0 0 2px #000">-15 V</text><rect x="1670.0" y="935.8" width="38.0" height="14" fill="#000"/><text x="1707" y="947.8" font-size="14" text-anchor="end" fill="#8ccb30" stroke="#8ccb30" stroke-width=".5" paint-order="stroke" style="text-shadow:0 0 2px #000,0 0 2px #000">-20 V</text>
<path d="M1690.8 382.5 L1702.5 372.5 V380.8 H1711 V384.4 H1702.5 V392.5 Z" fill="#20d0da"/>
<text x="181.6" y="958.2" font-size="13.5" text-anchor="middle" fill="#9a9a9a" stroke="#9a9a9a" stroke-width=".3">0 s</text>
<rect x="330.7" y="946.5" width="44" height="18.5" fill="#000"/>
<text x="352.7" y="958.2" font-size="13.5" text-anchor="middle" fill="#9a9a9a" stroke="#9a9a9a" stroke-width=".3">100 µs</text>
<rect x="500.5" y="946.5" width="44" height="18.5" fill="#000"/>
<text x="522.5" y="958.2" font-size="13.5" text-anchor="middle" fill="#9a9a9a" stroke="#9a9a9a" stroke-width=".3">200 µs</text>
<rect x="670.4" y="946.5" width="44" height="18.5" fill="#000"/>
<text x="692.4" y="958.2" font-size="13.5" text-anchor="middle" fill="#9a9a9a" stroke="#9a9a9a" stroke-width=".3">300 µs</text>
<rect x="840.2" y="946.5" width="44" height="18.5" fill="#000"/>
<text x="862.2" y="958.2" font-size="13.5" text-anchor="middle" fill="#9a9a9a" stroke="#9a9a9a" stroke-width=".3">400 µs</text>
<rect x="1010.1" y="946.5" width="44" height="18.5" fill="#000"/>
<text x="1032.1" y="958.2" font-size="13.5" text-anchor="middle" fill="#9a9a9a" stroke="#9a9a9a" stroke-width=".3">500 µs</text>
<rect x="1180.0" y="946.5" width="44" height="18.5" fill="#000"/>
<text x="1202.0" y="958.2" font-size="13.5" text-anchor="middle" fill="#9a9a9a" stroke="#9a9a9a" stroke-width=".3">600 µs</text>
<rect x="1349.8" y="946.5" width="44" height="18.5" fill="#000"/>
<text x="1371.8" y="958.2" font-size="13.5" text-anchor="middle" fill="#9a9a9a" stroke="#9a9a9a" stroke-width=".3">700 µs</text>
<rect x="1519.7" y="946.5" width="44" height="18.5" fill="#000"/>
<text x="1541.7" y="958.2" font-size="13.5" text-anchor="middle" fill="#9a9a9a" stroke="#9a9a9a" stroke-width=".3">800 µs</text>
<rect x="186" y="940" width="10" height="25" fill="#0e0e0e" opacity=".7"/>
<rect x="190" y="940" width="1.3" height="25" fill="#f2f2f2"/>
<rect x="883" y="940" width="1.3" height="25" fill="#f2f2f2"/>
<path d="M1661.8 82.8 H1701 Q1704.4 82.8 1704.4 86 V124.6 Z" fill="#4d4d4d"/>
<circle cx="1695.6" cy="90.4" r="4.6" fill="none" stroke="#9c9c9c" stroke-width="1.5"/>
<line x1="1692.2" y1="94" x2="1684.8" y2="100.8" stroke="#a4a4a4" stroke-width="2.8" stroke-linecap="round"/>
<path d="M172 75 H193 L182.5 85 Z" fill="#f28c1e"/>
<rect x="190" y="75" width="1.3" height="4" fill="#b8b0a8"/>
<path d="M173 299 H191 V317.3 H187 L182.5 324.5 L178 317.3 H173 Z" fill="#000" stroke="#f28c1e" stroke-width="2" stroke-linejoin="miter"/>
<text x="182.3" y="313.4" font-size="16" font-weight="bold" text-anchor="middle" fill="#f28c1e">T</text>
<rect x="190" y="298" width="1.3" height="21" fill="#a8a8a8"/>
<g stroke="#bcbcbc" stroke-width="2" fill="none" shape-rendering="crispEdges"><path d="M586 52 H580 V68 H586"/><path d="M1138 52 H1144 V68 H1138"/><line x1="579" y1="60" x2="1145" y2="60"/></g>
<path d="M628.2 46 H643 L635.6 51.3 Z" fill="#f28c1e"/>
<line x1="639" y1="47" x2="639" y2="74" stroke="#b8b8b8" stroke-width="2" stroke-dasharray="4 2"/>
<line x1="870" y1="47" x2="870" y2="74" stroke="#b8b8b8" stroke-width="2" stroke-dasharray="4 2"/>
<path d="M629.6 58.2 H641.4 V69.8 H638.2 L635.5 73.8 L632.8 69.8 H629.6 Z" fill="#1a1a1a" stroke="#f28c1e" stroke-width="1.4"/>
<text x="635.5" y="68" font-size="10.5" font-weight="bold" text-anchor="middle" fill="#f6a23c">T</text>
<line x1="639" y1="58" x2="639" y2="74" stroke="#d8d8d8" stroke-width="1.2" stroke-dasharray="5 2" opacity=".8"/>
<rect x="190" y="742" width="27.5" height="23" rx="5" fill="#3c3c3c"/>
<rect x="160" y="742.3" width="30.3" height="22.7" rx="5" fill="#82ba38"/>
<text x="175.2" y="757.6" font-size="15.5" text-anchor="middle" fill="#16240a">C4</text>
<rect x="190" y="742" width="1.3" height="24" fill="#e0e0e0"/>
<circle cx="204" cy="753.3" r="11.2" fill="#2585d2"/>
<text x="204" y="758.8" font-size="15.5" text-anchor="middle" fill="#fff">A</text>
<rect x="857" y="742" width="27" height="23" rx="5" fill="#3c3c3c"/>
<rect x="885" y="742.3" width="30.6" height="22.7" rx="5" fill="#82ba38"/>
<text x="900.3" y="757.6" font-size="15.5" text-anchor="middle" fill="#16240a">C4</text>
<rect x="883" y="742" width="1.3" height="24" fill="#f0f0f0"/>
<circle cx="870.1" cy="753.3" r="11.2" fill="#2585d2"/>
<text x="870.1" y="758.8" font-size="15.5" text-anchor="middle" fill="#fff">B</text>
<circle cx="190.6" cy="855" r="3.4" fill="none" stroke="#d8d8d8" stroke-width="1.2"/><line x1="195.6" y1="860" x2="200.1" y2="864.5" stroke="#d0d0d0" stroke-width="1.2"/><line x1="195.6" y1="850" x2="200.1" y2="845.5" stroke="#d0d0d0" stroke-width="1.2"/><line x1="185.6" y1="860" x2="181.1" y2="864.5" stroke="#d0d0d0" stroke-width="1.2"/><line x1="185.6" y1="850" x2="181.1" y2="845.5" stroke="#d0d0d0" stroke-width="1.2"/>
<circle cx="883.6" cy="777" r="3.4" fill="none" stroke="#d8d8d8" stroke-width="1.2"/><line x1="888.6" y1="782" x2="893.1" y2="786.5" stroke="#d0d0d0" stroke-width="1.2"/><line x1="888.6" y1="772" x2="893.1" y2="767.5" stroke="#d0d0d0" stroke-width="1.2"/><line x1="878.6" y1="782" x2="874.1" y2="786.5" stroke="#d0d0d0" stroke-width="1.2"/><line x1="878.6" y1="772" x2="874.1" y2="767.5" stroke="#d0d0d0" stroke-width="1.2"/>
</svg>
<div class="ro" style="left:22.3px;top:773px;width:167.4px;height:49.6px"><div class="t" style="left:5.300000000000001px;top:4.81px;font-size:17px;color:#e6e6e6;">t: 4.650 µs</div><div class="t" style="left:5.300000000000001px;top:25.01px;font-size:17px;color:#e6e6e6;">v: -414.935 mV</div></div>
<div class="ro" style="left:394.8px;top:773.2px;width:283.4px;height:55px"><div class="t" style="left:4.199999999999989px;top:6.11px;font-size:17px;color:#e6e6e6;">Δt: 407.534 µs</div><div class="t" style="left:142.7px;top:6.11px;font-size:17px;color:#e6e6e6;">1/Δt: 2.45 kHz</div><div class="t" style="left:4.199999999999989px;top:29.21px;font-size:17px;color:#e6e6e6;">Δv: 17.438 V</div><div class="t" style="left:123.90000000000003px;top:29.21px;font-size:17px;color:#e6e6e6;">Δv/Δt: 42.79 kV/s</div></div>
<div class="ro" style="left:885px;top:773.2px;width:166.6px;height:49px"><div class="t" style="left:4.5px;top:4.61px;font-size:17px;color:#e6e6e6;">t: 412.184 µs</div><div class="t" style="left:4.5px;top:24.81px;font-size:17px;color:#e6e6e6;">v: 17.023 V</div></div>
<svg class="abs" style="left:1480px;top:805px" width="24" height="34" viewBox="1480 805 24 34"><path d="M1484.4 809 V830.2 L1489.6 828.5 L1493.3 834.4 L1495.7 833.3 L1494.6 826.7 L1499.4 824 Z" fill="#1c1c1c" stroke="#e4e4e4" stroke-width="1.3" stroke-linejoin="round"/></svg>
</div>
</body></html>
